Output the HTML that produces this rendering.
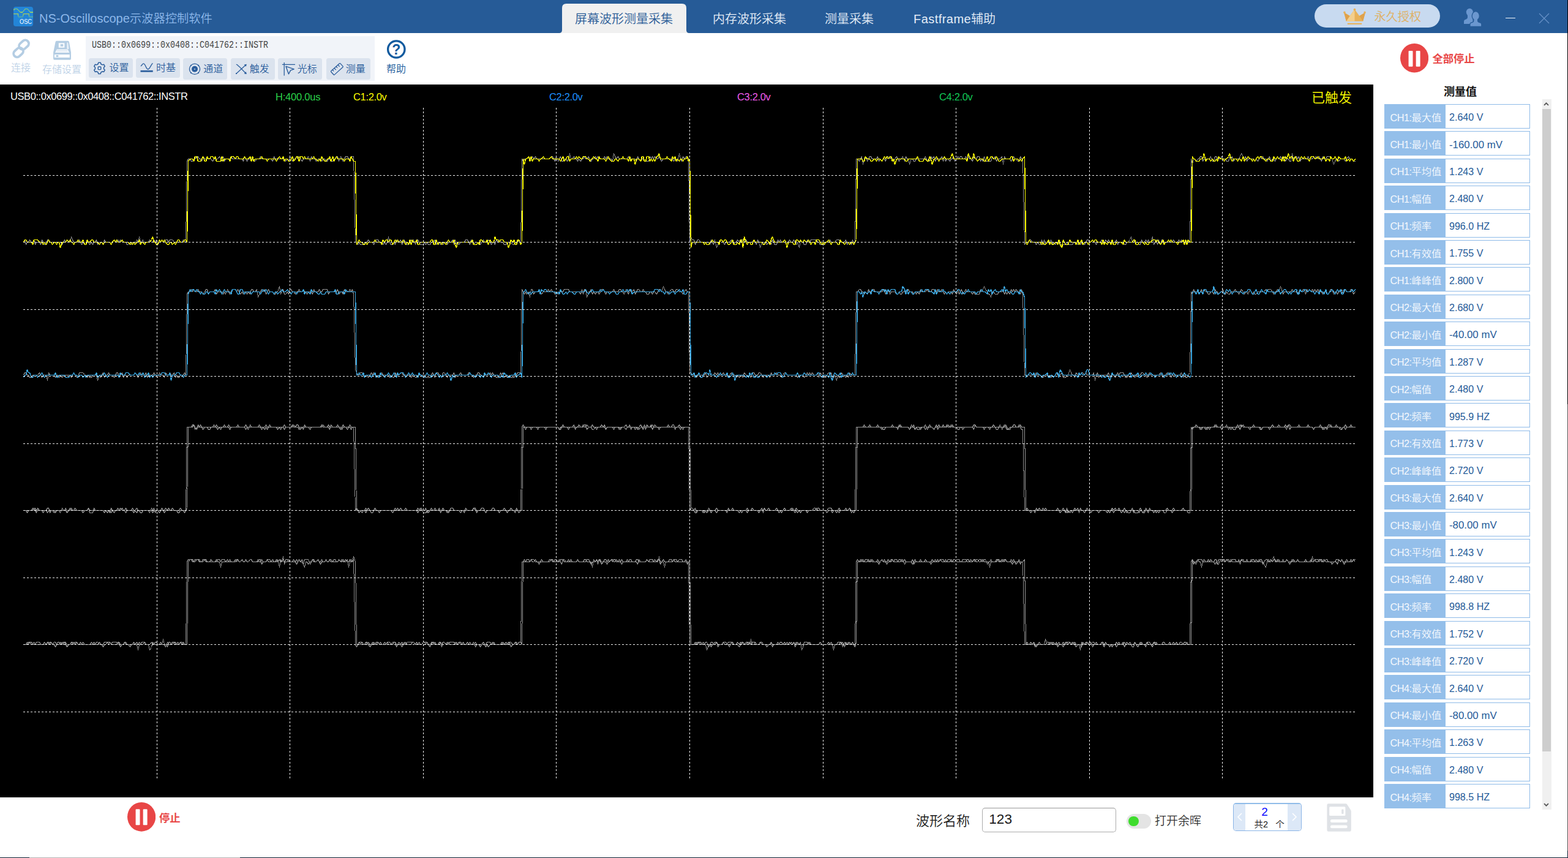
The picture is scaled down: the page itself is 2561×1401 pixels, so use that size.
<!DOCTYPE html><html lang="zh-CN"><head><meta charset="utf-8"><title>NS-Oscilloscope示波器控制软件</title><style>
*{box-sizing:border-box;margin:0;padding:0}
html,body{width:2561px;height:1401px;overflow:hidden;background:#fff}
body{position:relative;font-family:"Liberation Sans","Noto Sans CJK SC",sans-serif;font-weight:350;color:#222;-webkit-font-smoothing:antialiased}
.abs{position:absolute}
.t{position:absolute;white-space:nowrap;line-height:1}
#titlebar{left:0;top:0;width:2561px;height:54px;background:#265b97}
#toolbar{left:0;top:54px;width:2561px;height:84px;background:#fff}
#scope{left:0;top:138px;width:2243px;height:1164px;background:#000}
#panel{left:140px;top:59px;width:472px;height:73px;background:#f1f4f9}
.btn{position:absolute;width:71.6px;height:32px;background:#dbe3ee;border-radius:3.5px}
.btn .t{color:#2a5d9c;font-size:16px}
.row{position:absolute;left:2261px;width:238px;height:40px;border:1px solid #8fbbe8;background:#fff}
.row .lab{position:absolute;left:-1px;top:-1px;width:100px;height:40px;background:#94bfea}
.row .lt{position:absolute;left:8.6px;top:10.7px;font-size:16.3px;line-height:20px;color:#f4f8fd;white-space:nowrap}
.row .lt i{font-style:normal;letter-spacing:-0.55px}
.row .vt{position:absolute;left:105.3px;top:11.2px;font-size:17px;line-height:20px;color:#1f5a98;white-space:nowrap;transform:scaleX(.945);transform-origin:0 0}
.row .vt.mv{transform:scaleX(.99)}
</style></head><body>
<div id="titlebar" class="abs">
<svg class="abs" style="left:22px;top:11px" width="32" height="32" viewBox="0 0 32 32">
<rect x="0" y="0" width="32" height="32" rx="4" fill="#2385d8"/>
<path d="M0 5 L2.4 3.5 L6 3.5 L11 8.8 L15 8.8 L19.2 3.5 L22.8 3.5 L27.3 8.8 L32 8.8" fill="none" stroke="#93cb70" stroke-width="1.1"/>
<path d="M27.3 9.2 L32 9.2 M11.2 9.2 L15 9.2 M0.3 5 L1.6 5" fill="none" stroke="#93cb70" stroke-width="1.4"/>
<path d="M7.6 16.5 L15.6 16.5 M25.3 16.5 L32 16.5" fill="none" stroke="#4fa6ab" stroke-width="2"/>
<path d="M0 11.6 L7.6 11.6 L7.6 15.6 M15.6 15.6 L16.2 11.6 L25.3 11.6 L25.3 15.8" fill="none" stroke="#a9cc58" stroke-width="1.1"/>
<text x="10" y="28" font-family="Liberation Sans,sans-serif" font-size="10.2" fill="#fff" textLength="20" lengthAdjust="spacingAndGlyphs">OSC</text>
</svg>
<div class="t" id="apptitle" style="left:64px;top:18px;font-size:20px;line-height:24px;color:#8db8ea">NS-Oscilloscope<span style="font-size:19.3px">示波器控制软件</span></div>
<svg class="abs" style="left:914px;top:5px" width="211" height="49" viewBox="0 0 211 49">
<path d="M0 49 Q4 48.5 4 44 L4 8 Q4 1 11 1 L200 1 Q207 1 207 8 L207 44 Q207 48.5 211 49 Z" fill="#f0f0f0"/></svg>
<div class="t" style="left:939px;top:18px;font-size:20px;line-height:26px;color:#2a5c97">屏幕波形测量采集</div>
<div class="t" style="left:1164px;top:18px;font-size:20px;line-height:26px;color:#e4edf7">内存波形采集</div>
<div class="t" style="left:1347px;top:18px;font-size:20px;line-height:26px;color:#e4edf7">测量采集</div>
<div class="t" id="ff" style="left:1492px;top:18px;font-size:20px;line-height:26px;color:#e4edf7"><span style="letter-spacing:0.45px">Fastframe</span>辅助</div>
<div class="abs" style="left:2147px;top:7px;width:205px;height:38px;border-radius:19px;background:#c8daf0"></div>
<svg class="abs" style="left:2193.5px;top:13px" width="37" height="29" viewBox="0 0 38 29">
<path d="M5 22 L1 7 L11 13 L19 2 L27 13 L37 7 L33 22 Z" fill="#e8b25a"/>
<path d="M5 22 L1 7 L11 13 L19 2 L19 22 Z" fill="#f3cf8d"/>
<path d="M5 22 L1 7 L11 13 Z" fill="#dfa24c"/><path d="M33 22 L37 7 L27 13 Z" fill="#dfa24c"/>
<circle cx="19" cy="2.5" r="2" fill="#e8b25a"/><circle cx="2" cy="7" r="1.8" fill="#e8b25a"/><circle cx="36" cy="7" r="1.8" fill="#e8b25a"/>
<rect x="7" y="25" width="24" height="2.2" fill="#e8b25a"/></svg>
<div class="t" style="left:2244.5px;top:15px;font-size:19.2px;line-height:26px;letter-spacing:0px;color:#dfb062">永久授权</div>
<svg class="abs" style="left:2388px;top:11px" width="36" height="36" viewBox="2388 11 36 36">
<g fill="#6b97cf">
<ellipse cx="2400.3" cy="19.9" rx="5.5" ry="6.2"/>
<path d="M2397 24 L2397 28.5 Q2397 30.4 2395 31.2 L2392.6 32.2 Q2391 32.9 2391 34.8 L2391 38.9 L2405.5 38.9 L2405.5 24 Z"/>
</g>
<g fill="#6b97cf" stroke="#265b97" stroke-width="1.3">
<path d="M2407 30 L2407 34 Q2407 35.6 2405 36.3 L2402.5 37.2 Q2400.9 37.9 2400.9 39.8 L2400.9 43.3 L2419.8 43.3 L2419.8 39.8 Q2419.8 37.9 2418.2 37.2 L2415.6 36.3 Q2413.6 35.6 2413.6 34 L2413.6 30 Z"/>
<ellipse cx="2410.3" cy="25.9" rx="6.1" ry="7.2"/>
</g>
<rect x="2407.6" y="30" width="5.4" height="5" fill="#6b97cf"/>
</svg>
<div class="abs" style="left:2458.8px;top:28.6px;width:16.4px;height:1.6px;background:#f4f8fc"></div>
<svg class="abs" style="left:2513px;top:21px" width="18" height="18" viewBox="0 0 18 18"><path d="M1 1 L17 17 M17 1 L1 17" stroke="#6893c8" stroke-width="1.15" fill="none"/></svg>
</div>
<div id="toolbar" class="abs"></div>
<svg class="abs" style="left:17px;top:61px" width="36" height="36" viewBox="17 61 36 36">
<g fill="none" stroke="#b4cde3" stroke-width="3.9">
<rect x="30.4" y="67.45" width="17.3" height="11.5" rx="5.75" transform="rotate(-42 39.05 73.2)"/>
<rect x="21.4" y="79.8" width="17.3" height="11.5" rx="5.75" transform="rotate(-42 30.05 85.55)"/>
</g>
</svg>
<div class="t" style="left:18px;top:100px;font-size:16px;line-height:22px;color:#bed2e7">连接</div>
<svg class="abs" style="left:85px;top:65px" width="33" height="34" viewBox="85 65 33 34">
<path d="M92.5 66.8 L111 66.8 Q112.6 66.8 112.9 68.4 L116 85.5 L116 96 Q116 97.7 114.3 97.7 L88.8 97.7 Q87.1 97.7 87.1 96 L87.1 85.5 L90.6 68.4 Q90.9 66.8 92.5 66.8 Z" fill="#b4cde3"/>
<path d="M92.8 80.6 L110.6 80.6 L113.3 86 L89.9 86 Z" fill="#f3f7fb"/>
<path d="M109.3 69.5 L111.2 69.5 L112.6 80 L109.3 80 Z" fill="#eaf1f8"/>
<rect x="95.8" y="70.3" width="9.6" height="7.4" fill="#fbfdfe"/>
<rect x="98.8" y="72.1" width="4.4" height="3.7" fill="#b4cde3"/>
<rect x="93" y="82.4" width="17" height="1" fill="#d5e2ef"/>
<rect x="88.9" y="89" width="24.9" height="5" fill="#fbfdfe"/>
<rect x="91.6" y="90" width="3.7" height="3" fill="#b4cde3"/>
</svg>
<div class="t" style="left:69px;top:103px;font-size:16px;line-height:22px;color:#bed2e7">存储设置</div>
<div id="panel" class="abs"></div>
<div class="t" id="addr" style="left:150px;top:63.8px;font-family:'Liberation Mono','Noto Sans CJK SC',monospace;font-size:16px;line-height:20px;color:#444;transform:scaleX(.8333);transform-origin:0 0">USB0::0x0699::0x0408::C041762::INSTR</div>
<div class="btn" style="left:145.2px;top:95px;height:32px"></div>
<div class="t" style="left:178.6px;top:99.6px;font-size:16px;line-height:22px;color:#2a5d9c">设置</div>
<div class="btn" style="left:222.2px;top:95px;height:32px"></div>
<div class="t" style="left:254.9px;top:99.6px;font-size:16px;line-height:22px;color:#2a5d9c">时基</div>
<div class="btn" style="left:299.2px;top:95px;height:35px"></div>
<div class="t" style="left:332.2px;top:102.4px;font-size:16px;line-height:22px;color:#2a5d9c">通道</div>
<div class="btn" style="left:377.3px;top:95px;height:35px"></div>
<div class="t" style="left:407.8px;top:102.4px;font-size:16px;line-height:22px;color:#2a5d9c">触发</div>
<div class="btn" style="left:454.2px;top:95px;height:35px"></div>
<div class="t" style="left:485.8px;top:102.4px;font-size:16px;line-height:22px;color:#2a5d9c">光标</div>
<div class="btn" style="left:533.3px;top:95px;height:35px"></div>
<div class="t" style="left:564.8px;top:102.4px;font-size:16px;line-height:22px;color:#2a5d9c">测量</div>
<svg class="abs" style="left:140px;top:59px" width="472" height="73" viewBox="140 59 472 73">
<polygon points="164.84,104.49 164.27,102.17 160.73,102.17 160.16,104.49 157.78,105.87 155.48,105.20 153.71,108.27 155.43,109.93 155.43,112.67 153.71,114.33 155.48,117.40 157.78,116.73 160.16,118.11 160.73,120.43 164.27,120.43 164.84,118.11 167.22,116.73 169.52,117.40 171.29,114.33 169.57,112.67 169.57,109.93 171.29,108.27 169.52,105.20 167.22,105.87" fill="none" stroke="#2a5d9c" stroke-width="1.5" stroke-linejoin="round"/>
<rect x="160.2" y="109" width="4.6" height="4.6" rx="1" fill="none" stroke="#2a5d9c" stroke-width="1.4"/>
<path d="M229.8 107.9 C231.6 107.9 232 103.9 234.3 103.9 C237.6 103.9 238.4 113 241.7 113 C244.6 113 246.2 106 249.4 103.3" fill="none" stroke="#2a5d9c" stroke-width="1.4"/>
<rect x="229.5" y="114.9" width="20.2" height="2.7" fill="#2a5d9c"/>
<circle cx="318" cy="112.8" r="8.6" fill="none" stroke="#2a5d9c" stroke-width="1.3"/>
<circle cx="318" cy="112.8" r="5" fill="#2a5d9c"/>
<rect x="317.2" y="112" width="1.6" height="1.6" fill="#dbe3ee"/>
<circle cx="311.92" cy="106.72" r="1.05" fill="#2a5d9c"/>
<circle cx="324.08" cy="106.72" r="1.05" fill="#2a5d9c"/>
<circle cx="311.92" cy="118.88" r="1.05" fill="#2a5d9c"/>
<circle cx="324.08" cy="118.88" r="1.05" fill="#2a5d9c"/>
<path d="M385.6 120.4 L402 105.6 M385.8 105.4 Q387.6 105.2 388.4 106.6 Q389.2 108 390.6 108.6 L402 120.2" fill="none" stroke="#2a5d9c" stroke-width="1.3"/>
<path d="M402.8 104.8 L398.6 105.6 L401.8 108.8 Z M402.8 121 L398.6 120.2 L401.8 117 Z" fill="#2a5d9c"/>
<rect x="385" y="119.2" width="1.8" height="1.8" fill="#2a5d9c"/>
<path d="M464.2 102 V123.6 M460.9 105.3 H482" fill="none" stroke="#2a5d9c" stroke-width="1.3"/>
<path d="M467 108.4 L480.2 112.8 L474.6 114.8 L471.4 120.8 Z" fill="none" stroke="#2a5d9c" stroke-width="1.4" stroke-linejoin="round"/>
<g transform="rotate(-42 550.4 112.8)" fill="none" stroke="#2a5d9c" stroke-width="1.3"><rect x="540.2" y="108.7" width="20.4" height="8.2" rx="1.2"/><path d="M544.2 108.7 V111.8 M548.2 108.7 V112.6 M552.2 108.7 V111.8 M556.2 108.7 V112.6"/></g>
</svg>
<svg class="abs" style="left:630px;top:63px" width="36" height="36" viewBox="630 63 36 36">
<circle cx="647.3" cy="80.5" r="13.7" fill="none" stroke="#105a9e" stroke-width="3.3"/>
<text x="647.3" y="89.2" text-anchor="middle" font-family="Liberation Sans,sans-serif" font-weight="bold" font-size="23" fill="#105a9e">?</text></svg>
<div class="t" style="left:631px;top:102.3px;font-size:16px;line-height:22px;color:#1a5b9b">帮助</div>
<svg class="abs" style="left:2286.50px;top:71.20px" width="46.20" height="47.60" viewBox="0 0 50 50" preserveAspectRatio="none"><circle cx="25" cy="25" r="25" fill="#e84646"/><rect x="14.7" y="12.50" width="7.5" height="27.2" rx="1.2" fill="#fff"/><rect x="27.8" y="12.50" width="7.5" height="27.2" rx="1.2" fill="#fff"/></svg>
<div class="t" style="left:2339.4px;top:84.2px;font-size:17.3px;line-height:24px;font-weight:bold;color:#e84646">全部停止</div>
<div id="scope" class="abs"></div>
<svg class="abs" style="left:0;top:138px" width="2243" height="1164" viewBox="0 138 2243 1164">
<polyline points="38.5,395.5 40.5,391.5 42.5,399.5 44.5,395.5 46.5,395.5 48.5,391.5 51.5,395.5 53.5,395.5 55.5,391.5 57.5,399.5 59.5,395.5 61.5,395.5 64.5,395.5 66.5,399.5 68.5,391.5 70.5,395.5 72.5,399.5 75.5,399.5 77.5,391.5 79.5,391.5 81.5,395.5 83.5,395.5 85.5,395.5 88.5,395.5 90.5,395.5 92.5,395.5 94.5,395.5 96.5,395.5 98.5,395.5 101.5,399.5 103.5,395.5 105.5,391.5 107.5,395.5 109.5,391.5 112.5,395.5 114.5,395.5 116.5,386.5 118.5,391.5 120.5,395.5 122.5,395.5 125.5,395.5 127.5,395.5 129.5,391.5 131.5,395.5 133.5,399.5 135.5,395.5 138.5,399.5 140.5,399.5 142.5,395.5 144.5,395.5 146.5,399.5 149.5,395.5 151.5,399.5 153.5,395.5 155.5,395.5 157.5,391.5 159.5,399.5 162.5,395.5 164.5,395.5 166.5,395.5 168.5,399.5 170.5,391.5 172.5,395.5 175.5,395.5 177.5,395.5 179.5,395.5 181.5,399.5 183.5,395.5 186.5,391.5 188.5,395.5 190.5,395.5 192.5,391.5 194.5,395.5 196.5,391.5 199.5,395.5 201.5,395.5 203.5,395.5 205.5,395.5 207.5,399.5 209.5,399.5 212.5,395.5 214.5,399.5 216.5,395.5 218.5,395.5 220.5,399.5 223.5,391.5 225.5,395.5 227.5,386.5 229.5,395.5 231.5,395.5 233.5,391.5 236.5,399.5 238.5,395.5 240.5,395.5 242.5,395.5 244.5,391.5 247.5,395.5 249.5,395.5 251.5,391.5 253.5,395.5 255.5,391.5 257.5,399.5 260.5,395.5 262.5,395.5 264.5,391.5 266.5,395.5 268.5,395.5 270.5,391.5 273.5,391.5 275.5,395.5 277.5,391.5 279.5,391.5 281.5,391.5 284.5,395.5 286.5,395.5 288.5,395.5 290.5,395.5 292.5,395.5 294.5,395.5 297.5,395.5 299.5,391.5 301.5,395.5 303.5,395.5 305.5,263.5 307.5,259.5 310.5,259.5 312.5,263.5 314.5,263.5 316.5,259.5 318.5,259.5 321.5,255.5 323.5,255.5 325.5,259.5 327.5,259.5 329.5,263.5 331.5,255.5 334.5,259.5 336.5,259.5 338.5,259.5 340.5,259.5 342.5,259.5 344.5,259.5 347.5,263.5 349.5,259.5 351.5,259.5 353.5,259.5 355.5,259.5 358.5,255.5 360.5,259.5 362.5,263.5 364.5,255.5 366.5,263.5 368.5,259.5 371.5,259.5 373.5,259.5 375.5,259.5 377.5,255.5 379.5,259.5 381.5,259.5 384.5,259.5 386.5,259.5 388.5,259.5 390.5,259.5 392.5,259.5 395.5,259.5 397.5,263.5 399.5,255.5 401.5,259.5 403.5,263.5 405.5,259.5 408.5,259.5 410.5,259.5 412.5,259.5 414.5,263.5 416.5,263.5 419.5,259.5 421.5,259.5 423.5,259.5 425.5,255.5 427.5,259.5 429.5,259.5 432.5,259.5 434.5,259.5 436.5,259.5 438.5,259.5 440.5,259.5 442.5,259.5 445.5,263.5 447.5,255.5 449.5,259.5 451.5,259.5 453.5,259.5 456.5,259.5 458.5,259.5 460.5,259.5 462.5,259.5 464.5,259.5 466.5,263.5 469.5,259.5 471.5,263.5 473.5,255.5 475.5,259.5 477.5,263.5 479.5,259.5 482.5,259.5 484.5,255.5 486.5,259.5 488.5,255.5 490.5,259.5 493.5,263.5 495.5,259.5 497.5,259.5 499.5,259.5 501.5,259.5 503.5,255.5 506.5,263.5 508.5,255.5 510.5,259.5 512.5,259.5 514.5,259.5 516.5,263.5 519.5,259.5 521.5,259.5 523.5,259.5 525.5,263.5 527.5,259.5 530.5,259.5 532.5,263.5 534.5,263.5 536.5,259.5 538.5,259.5 540.5,263.5 543.5,263.5 545.5,259.5 547.5,259.5 549.5,255.5 551.5,255.5 553.5,263.5 556.5,255.5 558.5,259.5 560.5,263.5 562.5,259.5 564.5,255.5 567.5,255.5 569.5,259.5 571.5,259.5 573.5,255.5 575.5,255.5 577.5,255.5 580.5,395.5 582.5,395.5 584.5,399.5 586.5,395.5 588.5,399.5 591.5,399.5 593.5,399.5 595.5,395.5 597.5,395.5 599.5,395.5 601.5,391.5 604.5,395.5 606.5,395.5 608.5,395.5 610.5,399.5 612.5,395.5 614.5,391.5 617.5,391.5 619.5,395.5 621.5,395.5 623.5,395.5 625.5,399.5 628.5,395.5 630.5,399.5 632.5,395.5 634.5,386.5 636.5,395.5 638.5,399.5 641.5,399.5 643.5,395.5 645.5,399.5 647.5,391.5 649.5,395.5 651.5,395.5 654.5,391.5 656.5,399.5 658.5,395.5 660.5,391.5 662.5,399.5 665.5,399.5 667.5,399.5 669.5,395.5 671.5,391.5 673.5,395.5 675.5,391.5 678.5,399.5 680.5,391.5 682.5,391.5 684.5,395.5 686.5,399.5 688.5,399.5 691.5,399.5 693.5,395.5 695.5,399.5 697.5,395.5 699.5,399.5 702.5,399.5 704.5,395.5 706.5,395.5 708.5,395.5 710.5,391.5 712.5,399.5 715.5,395.5 717.5,395.5 719.5,399.5 721.5,395.5 723.5,399.5 725.5,395.5 728.5,395.5 730.5,399.5 732.5,395.5 734.5,395.5 736.5,395.5 739.5,391.5 741.5,399.5 743.5,391.5 745.5,399.5 747.5,395.5 749.5,399.5 752.5,395.5 754.5,395.5 756.5,395.5 758.5,395.5 760.5,391.5 763.5,391.5 765.5,395.5 767.5,399.5 769.5,391.5 771.5,395.5 773.5,395.5 776.5,399.5 778.5,399.5 780.5,395.5 782.5,399.5 784.5,399.5 786.5,395.5 789.5,391.5 791.5,395.5 793.5,395.5 795.5,395.5 797.5,391.5 800.5,395.5 802.5,399.5 804.5,395.5 806.5,395.5 808.5,399.5 810.5,391.5 813.5,395.5 815.5,391.5 817.5,395.5 819.5,395.5 821.5,395.5 823.5,399.5 826.5,399.5 828.5,395.5 830.5,395.5 832.5,395.5 834.5,395.5 837.5,399.5 839.5,399.5 841.5,395.5 843.5,395.5 845.5,395.5 847.5,391.5 850.5,399.5 852.5,259.5 854.5,263.5 856.5,259.5 858.5,259.5 860.5,259.5 863.5,255.5 865.5,259.5 867.5,259.5 869.5,255.5 871.5,259.5 874.5,255.5 876.5,259.5 878.5,259.5 880.5,259.5 882.5,259.5 884.5,259.5 887.5,259.5 889.5,259.5 891.5,259.5 893.5,259.5 895.5,259.5 897.5,259.5 900.5,255.5 902.5,255.5 904.5,259.5 906.5,263.5 908.5,255.5 911.5,263.5 913.5,259.5 915.5,255.5 917.5,263.5 919.5,263.5 921.5,259.5 924.5,259.5 926.5,263.5 928.5,259.5 930.5,250.5 932.5,259.5 934.5,259.5 937.5,255.5 939.5,259.5 941.5,259.5 943.5,263.5 945.5,259.5 948.5,263.5 950.5,259.5 952.5,259.5 954.5,255.5 956.5,259.5 958.5,259.5 961.5,255.5 963.5,263.5 965.5,263.5 967.5,259.5 969.5,259.5 972.5,255.5 974.5,259.5 976.5,255.5 978.5,259.5 980.5,259.5 982.5,259.5 985.5,259.5 987.5,255.5 989.5,259.5 991.5,255.5 993.5,259.5 995.5,259.5 998.5,259.5 1000.5,263.5 1002.5,250.5 1004.5,255.5 1006.5,259.5 1009.5,255.5 1011.5,259.5 1013.5,259.5 1015.5,259.5 1017.5,259.5 1019.5,259.5 1022.5,259.5 1024.5,259.5 1026.5,255.5 1028.5,259.5 1030.5,259.5 1032.5,259.5 1035.5,259.5 1037.5,259.5 1039.5,263.5 1041.5,255.5 1043.5,259.5 1046.5,263.5 1048.5,259.5 1050.5,259.5 1052.5,263.5 1054.5,263.5 1056.5,263.5 1059.5,263.5 1061.5,255.5 1063.5,259.5 1065.5,255.5 1067.5,259.5 1069.5,255.5 1072.5,259.5 1074.5,259.5 1076.5,255.5 1078.5,259.5 1080.5,263.5 1083.5,259.5 1085.5,259.5 1087.5,259.5 1089.5,259.5 1091.5,259.5 1093.5,259.5 1096.5,259.5 1098.5,259.5 1100.5,263.5 1102.5,259.5 1104.5,259.5 1106.5,263.5 1109.5,250.5 1111.5,259.5 1113.5,263.5 1115.5,255.5 1117.5,259.5 1120.5,255.5 1122.5,255.5 1124.5,259.5 1126.5,395.5 1128.5,386.5 1130.5,391.5 1133.5,391.5 1135.5,399.5 1137.5,395.5 1139.5,391.5 1141.5,391.5 1144.5,395.5 1146.5,395.5 1148.5,395.5 1150.5,395.5 1152.5,395.5 1154.5,395.5 1157.5,395.5 1159.5,399.5 1161.5,391.5 1163.5,395.5 1165.5,399.5 1167.5,391.5 1170.5,404.5 1172.5,399.5 1174.5,395.5 1176.5,391.5 1178.5,391.5 1181.5,395.5 1183.5,399.5 1185.5,395.5 1187.5,395.5 1189.5,395.5 1191.5,395.5 1194.5,391.5 1196.5,395.5 1198.5,399.5 1200.5,395.5 1202.5,395.5 1204.5,391.5 1207.5,395.5 1209.5,395.5 1211.5,391.5 1213.5,391.5 1215.5,395.5 1218.5,391.5 1220.5,395.5 1222.5,395.5 1224.5,395.5 1226.5,395.5 1228.5,395.5 1231.5,391.5 1233.5,395.5 1235.5,399.5 1237.5,391.5 1239.5,395.5 1241.5,404.5 1244.5,395.5 1246.5,399.5 1248.5,395.5 1250.5,395.5 1252.5,399.5 1255.5,395.5 1257.5,395.5 1259.5,399.5 1261.5,391.5 1263.5,395.5 1265.5,399.5 1268.5,399.5 1270.5,391.5 1272.5,395.5 1274.5,391.5 1276.5,395.5 1278.5,395.5 1281.5,395.5 1283.5,395.5 1285.5,395.5 1287.5,395.5 1289.5,391.5 1292.5,395.5 1294.5,395.5 1296.5,391.5 1298.5,395.5 1300.5,399.5 1302.5,395.5 1305.5,404.5 1307.5,391.5 1309.5,395.5 1311.5,395.5 1313.5,399.5 1316.5,399.5 1318.5,391.5 1320.5,395.5 1322.5,395.5 1324.5,391.5 1326.5,391.5 1329.5,391.5 1331.5,391.5 1333.5,391.5 1335.5,395.5 1337.5,395.5 1339.5,399.5 1342.5,399.5 1344.5,399.5 1346.5,395.5 1348.5,395.5 1350.5,395.5 1353.5,395.5 1355.5,391.5 1357.5,395.5 1359.5,395.5 1361.5,395.5 1363.5,395.5 1366.5,391.5 1368.5,391.5 1370.5,391.5 1372.5,395.5 1374.5,395.5 1376.5,395.5 1379.5,395.5 1381.5,391.5 1383.5,399.5 1385.5,395.5 1387.5,395.5 1390.5,399.5 1392.5,391.5 1394.5,399.5 1396.5,395.5 1398.5,259.5 1400.5,259.5 1403.5,263.5 1405.5,259.5 1407.5,255.5 1409.5,268.5 1411.5,259.5 1413.5,255.5 1416.5,263.5 1418.5,259.5 1420.5,255.5 1422.5,255.5 1424.5,259.5 1427.5,259.5 1429.5,259.5 1431.5,259.5 1433.5,255.5 1435.5,263.5 1437.5,259.5 1440.5,263.5 1442.5,259.5 1444.5,259.5 1446.5,263.5 1448.5,255.5 1450.5,255.5 1453.5,259.5 1455.5,255.5 1457.5,259.5 1459.5,263.5 1461.5,259.5 1464.5,255.5 1466.5,259.5 1468.5,263.5 1470.5,259.5 1472.5,259.5 1474.5,255.5 1477.5,263.5 1479.5,255.5 1481.5,259.5 1483.5,259.5 1485.5,268.5 1488.5,259.5 1490.5,259.5 1492.5,263.5 1494.5,263.5 1496.5,259.5 1498.5,259.5 1501.5,259.5 1503.5,259.5 1505.5,259.5 1507.5,259.5 1509.5,259.5 1511.5,255.5 1514.5,263.5 1516.5,259.5 1518.5,263.5 1520.5,255.5 1522.5,259.5 1525.5,255.5 1527.5,263.5 1529.5,259.5 1531.5,259.5 1533.5,259.5 1535.5,259.5 1538.5,255.5 1540.5,263.5 1542.5,255.5 1544.5,263.5 1546.5,259.5 1548.5,259.5 1551.5,263.5 1553.5,259.5 1555.5,259.5 1557.5,255.5 1559.5,263.5 1562.5,259.5 1564.5,255.5 1566.5,259.5 1568.5,255.5 1570.5,255.5 1572.5,259.5 1575.5,259.5 1577.5,255.5 1579.5,259.5 1581.5,255.5 1583.5,259.5 1585.5,259.5 1588.5,263.5 1590.5,255.5 1592.5,259.5 1594.5,259.5 1596.5,255.5 1599.5,255.5 1601.5,263.5 1603.5,259.5 1605.5,263.5 1607.5,255.5 1609.5,263.5 1612.5,263.5 1614.5,263.5 1616.5,263.5 1618.5,263.5 1620.5,255.5 1622.5,259.5 1625.5,255.5 1627.5,263.5 1629.5,259.5 1631.5,259.5 1633.5,259.5 1636.5,255.5 1638.5,268.5 1640.5,255.5 1642.5,259.5 1644.5,259.5 1646.5,259.5 1649.5,259.5 1651.5,263.5 1653.5,259.5 1655.5,255.5 1657.5,259.5 1659.5,259.5 1662.5,263.5 1664.5,263.5 1666.5,255.5 1668.5,259.5 1670.5,259.5 1673.5,399.5 1675.5,395.5 1677.5,395.5 1679.5,395.5 1681.5,391.5 1683.5,391.5 1686.5,395.5 1688.5,395.5 1690.5,395.5 1692.5,399.5 1694.5,395.5 1697.5,399.5 1699.5,399.5 1701.5,391.5 1703.5,399.5 1705.5,391.5 1707.5,399.5 1710.5,395.5 1712.5,395.5 1714.5,399.5 1716.5,391.5 1718.5,399.5 1720.5,395.5 1723.5,399.5 1725.5,395.5 1727.5,395.5 1729.5,395.5 1731.5,399.5 1734.5,399.5 1736.5,399.5 1738.5,399.5 1740.5,399.5 1742.5,395.5 1744.5,399.5 1747.5,399.5 1749.5,399.5 1751.5,399.5 1753.5,395.5 1755.5,395.5 1757.5,395.5 1760.5,399.5 1762.5,395.5 1764.5,399.5 1766.5,395.5 1768.5,399.5 1771.5,399.5 1773.5,395.5 1775.5,391.5 1777.5,391.5 1779.5,395.5 1781.5,395.5 1784.5,391.5 1786.5,395.5 1788.5,395.5 1790.5,399.5 1792.5,395.5 1794.5,395.5 1797.5,395.5 1799.5,391.5 1801.5,395.5 1803.5,399.5 1805.5,391.5 1808.5,395.5 1810.5,391.5 1812.5,395.5 1814.5,395.5 1816.5,395.5 1818.5,395.5 1821.5,395.5 1823.5,391.5 1825.5,399.5 1827.5,395.5 1829.5,395.5 1831.5,395.5 1834.5,395.5 1836.5,399.5 1838.5,399.5 1840.5,395.5 1842.5,395.5 1845.5,391.5 1847.5,386.5 1849.5,395.5 1851.5,391.5 1853.5,395.5 1855.5,395.5 1858.5,395.5 1860.5,399.5 1862.5,399.5 1864.5,391.5 1866.5,395.5 1869.5,395.5 1871.5,391.5 1873.5,395.5 1875.5,391.5 1877.5,395.5 1879.5,395.5 1882.5,386.5 1884.5,399.5 1886.5,395.5 1888.5,391.5 1890.5,399.5 1892.5,391.5 1895.5,399.5 1897.5,391.5 1899.5,391.5 1901.5,395.5 1903.5,395.5 1906.5,395.5 1908.5,395.5 1910.5,395.5 1912.5,395.5 1914.5,395.5 1916.5,391.5 1919.5,395.5 1921.5,395.5 1923.5,395.5 1925.5,391.5 1927.5,395.5 1929.5,391.5 1932.5,395.5 1934.5,395.5 1936.5,395.5 1938.5,395.5 1940.5,391.5 1943.5,395.5 1945.5,259.5 1947.5,268.5 1949.5,259.5 1951.5,259.5 1953.5,263.5 1956.5,259.5 1958.5,259.5 1960.5,255.5 1962.5,255.5 1964.5,263.5 1966.5,259.5 1969.5,259.5 1971.5,259.5 1973.5,259.5 1975.5,259.5 1977.5,255.5 1980.5,263.5 1982.5,263.5 1984.5,255.5 1986.5,255.5 1988.5,259.5 1990.5,259.5 1993.5,259.5 1995.5,255.5 1997.5,259.5 1999.5,259.5 2001.5,259.5 2003.5,263.5 2006.5,263.5 2008.5,255.5 2010.5,259.5 2012.5,255.5 2014.5,263.5 2017.5,259.5 2019.5,259.5 2021.5,259.5 2023.5,259.5 2025.5,255.5 2027.5,250.5 2030.5,255.5 2032.5,259.5 2034.5,255.5 2036.5,263.5 2038.5,259.5 2041.5,259.5 2043.5,259.5 2045.5,259.5 2047.5,259.5 2049.5,263.5 2051.5,259.5 2054.5,263.5 2056.5,259.5 2058.5,255.5 2060.5,259.5 2062.5,255.5 2064.5,259.5 2067.5,259.5 2069.5,263.5 2071.5,259.5 2073.5,255.5 2075.5,263.5 2078.5,259.5 2080.5,259.5 2082.5,263.5 2084.5,259.5 2086.5,255.5 2088.5,259.5 2091.5,255.5 2093.5,259.5 2095.5,259.5 2097.5,255.5 2099.5,263.5 2101.5,259.5 2104.5,259.5 2106.5,263.5 2108.5,263.5 2110.5,250.5 2112.5,259.5 2115.5,255.5 2117.5,255.5 2119.5,259.5 2121.5,255.5 2123.5,263.5 2125.5,259.5 2128.5,259.5 2130.5,259.5 2132.5,259.5 2134.5,259.5 2136.5,255.5 2138.5,259.5 2141.5,259.5 2143.5,259.5 2145.5,255.5 2147.5,259.5 2149.5,255.5 2152.5,259.5 2154.5,255.5 2156.5,259.5 2158.5,263.5 2160.5,255.5 2162.5,259.5 2165.5,259.5 2167.5,255.5 2169.5,255.5 2171.5,255.5 2173.5,255.5 2175.5,259.5 2178.5,268.5 2180.5,263.5 2182.5,259.5 2184.5,259.5 2186.5,263.5 2189.5,259.5 2191.5,259.5 2193.5,259.5 2195.5,259.5 2197.5,263.5 2199.5,259.5 2202.5,255.5 2204.5,259.5 2206.5,259.5 2208.5,259.5 2210.5,263.5 2213.5,263.5" fill="none" stroke="#8c8c8c" stroke-width="1" stroke-linejoin="bevel" shape-rendering="crispEdges"/>
<polyline points="38.5,395.5 40.5,391.5 42.5,391.5 44.5,395.5 46.5,395.5 48.5,395.5 51.5,395.5 53.5,399.5 55.5,391.5 57.5,391.5 59.5,391.5 61.5,391.5 64.5,395.5 66.5,395.5 68.5,395.5 70.5,399.5 72.5,395.5 75.5,399.5 77.5,395.5 79.5,391.5 81.5,395.5 83.5,395.5 85.5,399.5 88.5,395.5 90.5,395.5 92.5,399.5 94.5,395.5 96.5,395.5 98.5,404.5 101.5,395.5 103.5,395.5 105.5,395.5 107.5,395.5 109.5,391.5 112.5,395.5 114.5,391.5 116.5,395.5 118.5,395.5 120.5,399.5 122.5,395.5 125.5,395.5 127.5,391.5 129.5,395.5 131.5,395.5 133.5,395.5 135.5,391.5 138.5,399.5 140.5,399.5 142.5,391.5 144.5,395.5 146.5,395.5 149.5,391.5 151.5,391.5 153.5,395.5 155.5,395.5 157.5,395.5 159.5,395.5 162.5,399.5 164.5,395.5 166.5,395.5 168.5,399.5 170.5,395.5 172.5,395.5 175.5,395.5 177.5,395.5 179.5,395.5 181.5,399.5 183.5,395.5 186.5,391.5 188.5,395.5 190.5,391.5 192.5,395.5 194.5,395.5 196.5,395.5 199.5,391.5 201.5,395.5 203.5,395.5 205.5,395.5 207.5,395.5 209.5,395.5 212.5,399.5 214.5,395.5 216.5,399.5 218.5,395.5 220.5,399.5 223.5,395.5 225.5,395.5 227.5,391.5 229.5,399.5 231.5,395.5 233.5,395.5 236.5,399.5 238.5,395.5 240.5,395.5 242.5,395.5 244.5,395.5 247.5,391.5 249.5,386.5 251.5,395.5 253.5,395.5 255.5,399.5 257.5,399.5 260.5,391.5 262.5,395.5 264.5,391.5 266.5,395.5 268.5,391.5 270.5,395.5 273.5,399.5 275.5,399.5 277.5,395.5 279.5,395.5 281.5,399.5 284.5,395.5 286.5,399.5 288.5,395.5 290.5,391.5 292.5,391.5 294.5,395.5 297.5,395.5 299.5,395.5 301.5,391.5 303.5,391.5 305.5,395.5 307.5,263.5 310.5,259.5 312.5,259.5 314.5,259.5 316.5,263.5 318.5,255.5 321.5,255.5 323.5,263.5 325.5,263.5 327.5,263.5 329.5,259.5 331.5,255.5 334.5,263.5 336.5,263.5 338.5,255.5 340.5,259.5 342.5,259.5 344.5,255.5 347.5,255.5 349.5,259.5 351.5,255.5 353.5,263.5 355.5,263.5 358.5,263.5 360.5,263.5 362.5,255.5 364.5,263.5 366.5,259.5 368.5,259.5 371.5,259.5 373.5,259.5 375.5,263.5 377.5,255.5 379.5,255.5 381.5,255.5 384.5,259.5 386.5,255.5 388.5,255.5 390.5,259.5 392.5,259.5 395.5,259.5 397.5,259.5 399.5,255.5 401.5,259.5 403.5,259.5 405.5,259.5 408.5,255.5 410.5,263.5 412.5,255.5 414.5,263.5 416.5,259.5 419.5,259.5 421.5,259.5 423.5,259.5 425.5,259.5 427.5,255.5 429.5,259.5 432.5,259.5 434.5,259.5 436.5,263.5 438.5,259.5 440.5,259.5 442.5,259.5 445.5,259.5 447.5,259.5 449.5,259.5 451.5,263.5 453.5,259.5 456.5,255.5 458.5,259.5 460.5,259.5 462.5,255.5 464.5,263.5 466.5,259.5 469.5,259.5 471.5,263.5 473.5,263.5 475.5,259.5 477.5,255.5 479.5,263.5 482.5,259.5 484.5,255.5 486.5,255.5 488.5,263.5 490.5,255.5 493.5,255.5 495.5,259.5 497.5,255.5 499.5,259.5 501.5,259.5 503.5,259.5 506.5,259.5 508.5,259.5 510.5,259.5 512.5,255.5 514.5,259.5 516.5,259.5 519.5,263.5 521.5,259.5 523.5,263.5 525.5,255.5 527.5,259.5 530.5,263.5 532.5,263.5 534.5,259.5 536.5,259.5 538.5,255.5 540.5,263.5 543.5,255.5 545.5,263.5 547.5,259.5 549.5,255.5 551.5,259.5 553.5,259.5 556.5,259.5 558.5,259.5 560.5,259.5 562.5,263.5 564.5,259.5 567.5,259.5 569.5,259.5 571.5,263.5 573.5,255.5 575.5,259.5 577.5,263.5 580.5,263.5 582.5,399.5 584.5,395.5 586.5,391.5 588.5,395.5 591.5,395.5 593.5,399.5 595.5,399.5 597.5,395.5 599.5,399.5 601.5,395.5 604.5,395.5 606.5,395.5 608.5,395.5 610.5,395.5 612.5,391.5 614.5,395.5 617.5,395.5 619.5,395.5 621.5,395.5 623.5,399.5 625.5,391.5 628.5,395.5 630.5,391.5 632.5,391.5 634.5,395.5 636.5,391.5 638.5,391.5 641.5,399.5 643.5,395.5 645.5,391.5 647.5,395.5 649.5,391.5 651.5,395.5 654.5,395.5 656.5,395.5 658.5,391.5 660.5,395.5 662.5,399.5 665.5,395.5 667.5,399.5 669.5,391.5 671.5,399.5 673.5,391.5 675.5,395.5 678.5,395.5 680.5,391.5 682.5,399.5 684.5,399.5 686.5,395.5 688.5,395.5 691.5,395.5 693.5,395.5 695.5,395.5 697.5,395.5 699.5,395.5 702.5,395.5 704.5,391.5 706.5,391.5 708.5,399.5 710.5,399.5 712.5,391.5 715.5,399.5 717.5,395.5 719.5,395.5 721.5,399.5 723.5,395.5 725.5,395.5 728.5,399.5 730.5,395.5 732.5,391.5 734.5,395.5 736.5,395.5 739.5,395.5 741.5,391.5 743.5,399.5 745.5,404.5 747.5,395.5 749.5,395.5 752.5,395.5 754.5,395.5 756.5,395.5 758.5,395.5 760.5,395.5 763.5,395.5 765.5,395.5 767.5,395.5 769.5,395.5 771.5,391.5 773.5,399.5 776.5,399.5 778.5,399.5 780.5,395.5 782.5,399.5 784.5,391.5 786.5,391.5 789.5,395.5 791.5,395.5 793.5,395.5 795.5,391.5 797.5,399.5 800.5,391.5 802.5,395.5 804.5,395.5 806.5,395.5 808.5,386.5 810.5,391.5 813.5,391.5 815.5,395.5 817.5,391.5 819.5,391.5 821.5,391.5 823.5,395.5 826.5,395.5 828.5,395.5 830.5,404.5 832.5,399.5 834.5,391.5 837.5,395.5 839.5,391.5 841.5,399.5 843.5,399.5 845.5,391.5 847.5,391.5 850.5,399.5 852.5,395.5 854.5,259.5 856.5,268.5 858.5,259.5 860.5,259.5 863.5,255.5 865.5,263.5 867.5,255.5 869.5,263.5 871.5,259.5 874.5,259.5 876.5,259.5 878.5,259.5 880.5,263.5 882.5,259.5 884.5,259.5 887.5,255.5 889.5,259.5 891.5,259.5 893.5,259.5 895.5,259.5 897.5,259.5 900.5,255.5 902.5,259.5 904.5,259.5 906.5,259.5 908.5,259.5 911.5,259.5 913.5,259.5 915.5,263.5 917.5,259.5 919.5,255.5 921.5,263.5 924.5,259.5 926.5,255.5 928.5,255.5 930.5,263.5 932.5,259.5 934.5,259.5 937.5,259.5 939.5,259.5 941.5,255.5 943.5,259.5 945.5,255.5 948.5,259.5 950.5,259.5 952.5,255.5 954.5,255.5 956.5,255.5 958.5,259.5 961.5,259.5 963.5,263.5 965.5,259.5 967.5,259.5 969.5,255.5 972.5,259.5 974.5,259.5 976.5,263.5 978.5,255.5 980.5,259.5 982.5,259.5 985.5,259.5 987.5,259.5 989.5,263.5 991.5,259.5 993.5,255.5 995.5,259.5 998.5,263.5 1000.5,263.5 1002.5,263.5 1004.5,259.5 1006.5,259.5 1009.5,263.5 1011.5,259.5 1013.5,259.5 1015.5,259.5 1017.5,255.5 1019.5,259.5 1022.5,259.5 1024.5,259.5 1026.5,263.5 1028.5,255.5 1030.5,263.5 1032.5,259.5 1035.5,259.5 1037.5,268.5 1039.5,259.5 1041.5,259.5 1043.5,259.5 1046.5,263.5 1048.5,255.5 1050.5,255.5 1052.5,263.5 1054.5,263.5 1056.5,255.5 1059.5,255.5 1061.5,263.5 1063.5,259.5 1065.5,263.5 1067.5,259.5 1069.5,263.5 1072.5,255.5 1074.5,255.5 1076.5,250.5 1078.5,259.5 1080.5,259.5 1083.5,259.5 1085.5,259.5 1087.5,259.5 1089.5,255.5 1091.5,259.5 1093.5,259.5 1096.5,263.5 1098.5,255.5 1100.5,259.5 1102.5,255.5 1104.5,263.5 1106.5,259.5 1109.5,263.5 1111.5,259.5 1113.5,259.5 1115.5,263.5 1117.5,259.5 1120.5,259.5 1122.5,255.5 1124.5,263.5 1126.5,259.5 1128.5,404.5 1130.5,395.5 1133.5,395.5 1135.5,395.5 1137.5,395.5 1139.5,395.5 1141.5,395.5 1144.5,395.5 1146.5,395.5 1148.5,395.5 1150.5,399.5 1152.5,395.5 1154.5,399.5 1157.5,399.5 1159.5,395.5 1161.5,395.5 1163.5,391.5 1165.5,395.5 1167.5,395.5 1170.5,395.5 1172.5,395.5 1174.5,399.5 1176.5,391.5 1178.5,391.5 1181.5,395.5 1183.5,391.5 1185.5,391.5 1187.5,395.5 1189.5,399.5 1191.5,399.5 1194.5,395.5 1196.5,391.5 1198.5,399.5 1200.5,399.5 1202.5,399.5 1204.5,395.5 1207.5,399.5 1209.5,391.5 1211.5,391.5 1213.5,404.5 1215.5,386.5 1218.5,395.5 1220.5,399.5 1222.5,395.5 1224.5,395.5 1226.5,399.5 1228.5,399.5 1231.5,391.5 1233.5,395.5 1235.5,395.5 1237.5,395.5 1239.5,395.5 1241.5,395.5 1244.5,395.5 1246.5,399.5 1248.5,399.5 1250.5,395.5 1252.5,391.5 1255.5,395.5 1257.5,399.5 1259.5,391.5 1261.5,386.5 1263.5,391.5 1265.5,395.5 1268.5,395.5 1270.5,395.5 1272.5,395.5 1274.5,395.5 1276.5,395.5 1278.5,395.5 1281.5,391.5 1283.5,395.5 1285.5,404.5 1287.5,395.5 1289.5,395.5 1292.5,395.5 1294.5,395.5 1296.5,399.5 1298.5,399.5 1300.5,391.5 1302.5,391.5 1305.5,395.5 1307.5,391.5 1309.5,395.5 1311.5,395.5 1313.5,391.5 1316.5,395.5 1318.5,395.5 1320.5,391.5 1322.5,395.5 1324.5,399.5 1326.5,395.5 1329.5,395.5 1331.5,399.5 1333.5,391.5 1335.5,391.5 1337.5,391.5 1339.5,395.5 1342.5,399.5 1344.5,395.5 1346.5,399.5 1348.5,395.5 1350.5,395.5 1353.5,391.5 1355.5,395.5 1357.5,399.5 1359.5,395.5 1361.5,395.5 1363.5,395.5 1366.5,395.5 1368.5,399.5 1370.5,399.5 1372.5,391.5 1374.5,395.5 1376.5,395.5 1379.5,399.5 1381.5,395.5 1383.5,395.5 1385.5,395.5 1387.5,399.5 1390.5,395.5 1392.5,395.5 1394.5,399.5 1396.5,395.5 1398.5,391.5 1400.5,259.5 1403.5,259.5 1405.5,259.5 1407.5,259.5 1409.5,263.5 1411.5,263.5 1413.5,255.5 1416.5,259.5 1418.5,259.5 1420.5,259.5 1422.5,263.5 1424.5,263.5 1427.5,259.5 1429.5,259.5 1431.5,263.5 1433.5,259.5 1435.5,259.5 1437.5,259.5 1440.5,263.5 1442.5,259.5 1444.5,255.5 1446.5,259.5 1448.5,255.5 1450.5,259.5 1453.5,255.5 1455.5,255.5 1457.5,263.5 1459.5,259.5 1461.5,268.5 1464.5,259.5 1466.5,259.5 1468.5,259.5 1470.5,259.5 1472.5,259.5 1474.5,259.5 1477.5,259.5 1479.5,263.5 1481.5,263.5 1483.5,259.5 1485.5,259.5 1488.5,259.5 1490.5,259.5 1492.5,259.5 1494.5,259.5 1496.5,259.5 1498.5,255.5 1501.5,263.5 1503.5,263.5 1505.5,263.5 1507.5,263.5 1509.5,259.5 1511.5,259.5 1514.5,263.5 1516.5,263.5 1518.5,255.5 1520.5,259.5 1522.5,268.5 1525.5,259.5 1527.5,259.5 1529.5,255.5 1531.5,259.5 1533.5,263.5 1535.5,259.5 1538.5,259.5 1540.5,259.5 1542.5,255.5 1544.5,259.5 1546.5,259.5 1548.5,259.5 1551.5,259.5 1553.5,255.5 1555.5,250.5 1557.5,259.5 1559.5,259.5 1562.5,259.5 1564.5,259.5 1566.5,259.5 1568.5,259.5 1570.5,259.5 1572.5,259.5 1575.5,259.5 1577.5,259.5 1579.5,263.5 1581.5,250.5 1583.5,255.5 1585.5,259.5 1588.5,259.5 1590.5,250.5 1592.5,259.5 1594.5,259.5 1596.5,263.5 1599.5,259.5 1601.5,259.5 1603.5,259.5 1605.5,259.5 1607.5,263.5 1609.5,263.5 1612.5,255.5 1614.5,263.5 1616.5,259.5 1618.5,255.5 1620.5,255.5 1622.5,259.5 1625.5,259.5 1627.5,255.5 1629.5,259.5 1631.5,263.5 1633.5,263.5 1636.5,259.5 1638.5,259.5 1640.5,259.5 1642.5,259.5 1644.5,259.5 1646.5,259.5 1649.5,259.5 1651.5,255.5 1653.5,255.5 1655.5,263.5 1657.5,259.5 1659.5,259.5 1662.5,259.5 1664.5,263.5 1666.5,259.5 1668.5,263.5 1670.5,259.5 1673.5,255.5 1675.5,395.5 1677.5,399.5 1679.5,395.5 1681.5,391.5 1683.5,395.5 1686.5,395.5 1688.5,395.5 1690.5,395.5 1692.5,395.5 1694.5,395.5 1697.5,395.5 1699.5,395.5 1701.5,399.5 1703.5,395.5 1705.5,399.5 1707.5,399.5 1710.5,395.5 1712.5,391.5 1714.5,399.5 1716.5,395.5 1718.5,399.5 1720.5,399.5 1723.5,395.5 1725.5,395.5 1727.5,399.5 1729.5,391.5 1731.5,399.5 1734.5,404.5 1736.5,391.5 1738.5,395.5 1740.5,399.5 1742.5,399.5 1744.5,399.5 1747.5,391.5 1749.5,395.5 1751.5,395.5 1753.5,395.5 1755.5,395.5 1757.5,399.5 1760.5,391.5 1762.5,399.5 1764.5,395.5 1766.5,391.5 1768.5,399.5 1771.5,395.5 1773.5,395.5 1775.5,395.5 1777.5,399.5 1779.5,395.5 1781.5,395.5 1784.5,391.5 1786.5,395.5 1788.5,391.5 1790.5,391.5 1792.5,395.5 1794.5,395.5 1797.5,395.5 1799.5,399.5 1801.5,391.5 1803.5,399.5 1805.5,395.5 1808.5,399.5 1810.5,395.5 1812.5,395.5 1814.5,399.5 1816.5,391.5 1818.5,399.5 1821.5,399.5 1823.5,395.5 1825.5,395.5 1827.5,395.5 1829.5,395.5 1831.5,395.5 1834.5,399.5 1836.5,391.5 1838.5,395.5 1840.5,395.5 1842.5,395.5 1845.5,395.5 1847.5,395.5 1849.5,395.5 1851.5,391.5 1853.5,391.5 1855.5,399.5 1858.5,399.5 1860.5,395.5 1862.5,395.5 1864.5,395.5 1866.5,395.5 1869.5,399.5 1871.5,395.5 1873.5,399.5 1875.5,399.5 1877.5,395.5 1879.5,395.5 1882.5,391.5 1884.5,391.5 1886.5,391.5 1888.5,395.5 1890.5,391.5 1892.5,395.5 1895.5,399.5 1897.5,395.5 1899.5,391.5 1901.5,399.5 1903.5,395.5 1906.5,395.5 1908.5,391.5 1910.5,395.5 1912.5,391.5 1914.5,395.5 1916.5,395.5 1919.5,395.5 1921.5,395.5 1923.5,399.5 1925.5,395.5 1927.5,395.5 1929.5,395.5 1932.5,391.5 1934.5,399.5 1936.5,391.5 1938.5,399.5 1940.5,391.5 1943.5,395.5 1945.5,395.5 1947.5,255.5 1949.5,259.5 1951.5,259.5 1953.5,263.5 1956.5,263.5 1958.5,263.5 1960.5,259.5 1962.5,259.5 1964.5,259.5 1966.5,250.5 1969.5,263.5 1971.5,259.5 1973.5,259.5 1975.5,259.5 1977.5,263.5 1980.5,259.5 1982.5,263.5 1984.5,263.5 1986.5,259.5 1988.5,263.5 1990.5,255.5 1993.5,259.5 1995.5,259.5 1997.5,259.5 1999.5,263.5 2001.5,259.5 2003.5,259.5 2006.5,255.5 2008.5,250.5 2010.5,259.5 2012.5,263.5 2014.5,259.5 2017.5,259.5 2019.5,259.5 2021.5,263.5 2023.5,259.5 2025.5,259.5 2027.5,263.5 2030.5,255.5 2032.5,263.5 2034.5,259.5 2036.5,259.5 2038.5,255.5 2041.5,259.5 2043.5,259.5 2045.5,263.5 2047.5,259.5 2049.5,263.5 2051.5,259.5 2054.5,255.5 2056.5,259.5 2058.5,255.5 2060.5,255.5 2062.5,259.5 2064.5,259.5 2067.5,263.5 2069.5,259.5 2071.5,259.5 2073.5,259.5 2075.5,263.5 2078.5,263.5 2080.5,255.5 2082.5,259.5 2084.5,259.5 2086.5,255.5 2088.5,259.5 2091.5,259.5 2093.5,263.5 2095.5,255.5 2097.5,263.5 2099.5,255.5 2101.5,259.5 2104.5,250.5 2106.5,259.5 2108.5,255.5 2110.5,255.5 2112.5,263.5 2115.5,255.5 2117.5,259.5 2119.5,263.5 2121.5,263.5 2123.5,259.5 2125.5,255.5 2128.5,259.5 2130.5,255.5 2132.5,259.5 2134.5,259.5 2136.5,259.5 2138.5,263.5 2141.5,255.5 2143.5,255.5 2145.5,255.5 2147.5,259.5 2149.5,259.5 2152.5,255.5 2154.5,259.5 2156.5,259.5 2158.5,259.5 2160.5,259.5 2162.5,255.5 2165.5,263.5 2167.5,259.5 2169.5,259.5 2171.5,263.5 2173.5,255.5 2175.5,259.5 2178.5,259.5 2180.5,255.5 2182.5,259.5 2184.5,263.5 2186.5,255.5 2189.5,259.5 2191.5,259.5 2193.5,259.5 2195.5,259.5 2197.5,255.5 2199.5,263.5 2202.5,259.5 2204.5,263.5 2206.5,259.5 2208.5,259.5 2210.5,263.5 2213.5,259.5" fill="none" stroke="#ffff00" stroke-width="1.5" stroke-linejoin="bevel" shape-rendering="crispEdges"/>
<polyline points="38.5,612.5 40.5,608.5 42.5,608.5 44.5,612.5 46.5,612.5 48.5,616.5 51.5,616.5 53.5,612.5 55.5,612.5 57.5,612.5 59.5,612.5 61.5,612.5 64.5,608.5 66.5,612.5 68.5,616.5 70.5,612.5 72.5,612.5 75.5,612.5 77.5,621.5 79.5,608.5 81.5,612.5 83.5,612.5 85.5,612.5 88.5,612.5 90.5,616.5 92.5,612.5 94.5,612.5 96.5,616.5 98.5,612.5 101.5,616.5 103.5,612.5 105.5,612.5 107.5,612.5 109.5,612.5 112.5,612.5 114.5,612.5 116.5,616.5 118.5,612.5 120.5,608.5 122.5,612.5 125.5,616.5 127.5,616.5 129.5,608.5 131.5,608.5 133.5,608.5 135.5,608.5 138.5,612.5 140.5,612.5 142.5,616.5 144.5,612.5 146.5,616.5 149.5,616.5 151.5,612.5 153.5,612.5 155.5,612.5 157.5,612.5 159.5,621.5 162.5,612.5 164.5,616.5 166.5,612.5 168.5,608.5 170.5,616.5 172.5,612.5 175.5,612.5 177.5,608.5 179.5,612.5 181.5,612.5 183.5,612.5 186.5,616.5 188.5,612.5 190.5,608.5 192.5,608.5 194.5,616.5 196.5,612.5 199.5,608.5 201.5,616.5 203.5,612.5 205.5,612.5 207.5,616.5 209.5,612.5 212.5,612.5 214.5,612.5 216.5,612.5 218.5,612.5 220.5,608.5 223.5,612.5 225.5,616.5 227.5,612.5 229.5,608.5 231.5,612.5 233.5,612.5 236.5,612.5 238.5,608.5 240.5,616.5 242.5,612.5 244.5,612.5 247.5,612.5 249.5,612.5 251.5,608.5 253.5,612.5 255.5,612.5 257.5,616.5 260.5,608.5 262.5,612.5 264.5,612.5 266.5,612.5 268.5,616.5 270.5,608.5 273.5,612.5 275.5,612.5 277.5,608.5 279.5,612.5 281.5,612.5 284.5,608.5 286.5,616.5 288.5,612.5 290.5,616.5 292.5,616.5 294.5,612.5 297.5,612.5 299.5,612.5 301.5,608.5 303.5,612.5 305.5,480.5 307.5,476.5 310.5,476.5 312.5,472.5 314.5,476.5 316.5,472.5 318.5,476.5 321.5,476.5 323.5,472.5 325.5,476.5 327.5,476.5 329.5,476.5 331.5,480.5 334.5,476.5 336.5,472.5 338.5,472.5 340.5,480.5 342.5,476.5 344.5,476.5 347.5,476.5 349.5,476.5 351.5,472.5 353.5,480.5 355.5,476.5 358.5,476.5 360.5,476.5 362.5,476.5 364.5,480.5 366.5,476.5 368.5,480.5 371.5,472.5 373.5,476.5 375.5,480.5 377.5,476.5 379.5,472.5 381.5,472.5 384.5,472.5 386.5,476.5 388.5,472.5 390.5,476.5 392.5,480.5 395.5,476.5 397.5,480.5 399.5,476.5 401.5,476.5 403.5,480.5 405.5,476.5 408.5,480.5 410.5,472.5 412.5,472.5 414.5,476.5 416.5,476.5 419.5,472.5 421.5,485.5 423.5,480.5 425.5,476.5 427.5,472.5 429.5,476.5 432.5,472.5 434.5,480.5 436.5,476.5 438.5,472.5 440.5,476.5 442.5,476.5 445.5,476.5 447.5,480.5 449.5,480.5 451.5,476.5 453.5,476.5 456.5,467.5 458.5,480.5 460.5,472.5 462.5,472.5 464.5,480.5 466.5,480.5 469.5,476.5 471.5,480.5 473.5,472.5 475.5,472.5 477.5,476.5 479.5,476.5 482.5,480.5 484.5,476.5 486.5,476.5 488.5,472.5 490.5,476.5 493.5,476.5 495.5,472.5 497.5,476.5 499.5,476.5 501.5,480.5 503.5,476.5 506.5,476.5 508.5,476.5 510.5,480.5 512.5,472.5 514.5,476.5 516.5,476.5 519.5,476.5 521.5,472.5 523.5,476.5 525.5,476.5 527.5,472.5 530.5,472.5 532.5,472.5 534.5,472.5 536.5,480.5 538.5,476.5 540.5,476.5 543.5,476.5 545.5,476.5 547.5,476.5 549.5,476.5 551.5,472.5 553.5,480.5 556.5,476.5 558.5,476.5 560.5,480.5 562.5,472.5 564.5,476.5 567.5,476.5 569.5,476.5 571.5,472.5 573.5,476.5 575.5,472.5 577.5,480.5 580.5,603.5 582.5,608.5 584.5,612.5 586.5,612.5 588.5,608.5 591.5,608.5 593.5,612.5 595.5,616.5 597.5,612.5 599.5,612.5 601.5,616.5 604.5,612.5 606.5,608.5 608.5,612.5 610.5,608.5 612.5,612.5 614.5,612.5 617.5,616.5 619.5,612.5 621.5,612.5 623.5,608.5 625.5,612.5 628.5,612.5 630.5,612.5 632.5,612.5 634.5,612.5 636.5,616.5 638.5,612.5 641.5,616.5 643.5,616.5 645.5,608.5 647.5,612.5 649.5,612.5 651.5,612.5 654.5,608.5 656.5,608.5 658.5,612.5 660.5,612.5 662.5,612.5 665.5,612.5 667.5,612.5 669.5,612.5 671.5,616.5 673.5,612.5 675.5,612.5 678.5,616.5 680.5,616.5 682.5,612.5 684.5,612.5 686.5,612.5 688.5,612.5 691.5,612.5 693.5,612.5 695.5,616.5 697.5,616.5 699.5,616.5 702.5,616.5 704.5,612.5 706.5,608.5 708.5,612.5 710.5,616.5 712.5,608.5 715.5,608.5 717.5,612.5 719.5,612.5 721.5,616.5 723.5,608.5 725.5,608.5 728.5,612.5 730.5,616.5 732.5,612.5 734.5,612.5 736.5,612.5 739.5,612.5 741.5,608.5 743.5,616.5 745.5,612.5 747.5,612.5 749.5,612.5 752.5,608.5 754.5,612.5 756.5,612.5 758.5,612.5 760.5,612.5 763.5,612.5 765.5,608.5 767.5,608.5 769.5,612.5 771.5,612.5 773.5,616.5 776.5,612.5 778.5,612.5 780.5,608.5 782.5,608.5 784.5,612.5 786.5,612.5 789.5,616.5 791.5,612.5 793.5,612.5 795.5,612.5 797.5,612.5 800.5,608.5 802.5,612.5 804.5,608.5 806.5,612.5 808.5,612.5 810.5,616.5 813.5,616.5 815.5,616.5 817.5,608.5 819.5,612.5 821.5,608.5 823.5,616.5 826.5,612.5 828.5,616.5 830.5,616.5 832.5,612.5 834.5,616.5 837.5,616.5 839.5,616.5 841.5,612.5 843.5,612.5 845.5,608.5 847.5,608.5 850.5,608.5 852.5,472.5 854.5,476.5 856.5,480.5 858.5,476.5 860.5,480.5 863.5,476.5 865.5,485.5 867.5,472.5 869.5,472.5 871.5,480.5 874.5,476.5 876.5,476.5 878.5,476.5 880.5,476.5 882.5,476.5 884.5,480.5 887.5,476.5 889.5,476.5 891.5,476.5 893.5,476.5 895.5,472.5 897.5,476.5 900.5,472.5 902.5,476.5 904.5,476.5 906.5,480.5 908.5,476.5 911.5,480.5 913.5,476.5 915.5,476.5 917.5,476.5 919.5,476.5 921.5,472.5 924.5,472.5 926.5,472.5 928.5,472.5 930.5,476.5 932.5,476.5 934.5,476.5 937.5,476.5 939.5,476.5 941.5,476.5 943.5,476.5 945.5,476.5 948.5,480.5 950.5,472.5 952.5,480.5 954.5,472.5 956.5,472.5 958.5,485.5 961.5,476.5 963.5,476.5 965.5,472.5 967.5,480.5 969.5,476.5 972.5,480.5 974.5,476.5 976.5,476.5 978.5,480.5 980.5,476.5 982.5,472.5 985.5,472.5 987.5,476.5 989.5,480.5 991.5,476.5 993.5,476.5 995.5,476.5 998.5,476.5 1000.5,476.5 1002.5,472.5 1004.5,476.5 1006.5,476.5 1009.5,476.5 1011.5,472.5 1013.5,472.5 1015.5,476.5 1017.5,476.5 1019.5,480.5 1022.5,472.5 1024.5,476.5 1026.5,480.5 1028.5,472.5 1030.5,476.5 1032.5,476.5 1035.5,472.5 1037.5,480.5 1039.5,476.5 1041.5,472.5 1043.5,472.5 1046.5,476.5 1048.5,476.5 1050.5,472.5 1052.5,476.5 1054.5,476.5 1056.5,480.5 1059.5,480.5 1061.5,476.5 1063.5,476.5 1065.5,480.5 1067.5,476.5 1069.5,476.5 1072.5,480.5 1074.5,476.5 1076.5,472.5 1078.5,472.5 1080.5,476.5 1083.5,467.5 1085.5,472.5 1087.5,476.5 1089.5,476.5 1091.5,480.5 1093.5,476.5 1096.5,472.5 1098.5,472.5 1100.5,476.5 1102.5,476.5 1104.5,472.5 1106.5,472.5 1109.5,476.5 1111.5,476.5 1113.5,476.5 1115.5,480.5 1117.5,476.5 1120.5,472.5 1122.5,476.5 1124.5,476.5 1126.5,608.5 1128.5,608.5 1130.5,612.5 1133.5,612.5 1135.5,612.5 1137.5,616.5 1139.5,612.5 1141.5,612.5 1144.5,612.5 1146.5,612.5 1148.5,612.5 1150.5,612.5 1152.5,608.5 1154.5,616.5 1157.5,612.5 1159.5,612.5 1161.5,612.5 1163.5,612.5 1165.5,612.5 1167.5,608.5 1170.5,612.5 1172.5,608.5 1174.5,612.5 1176.5,612.5 1178.5,612.5 1181.5,608.5 1183.5,612.5 1185.5,612.5 1187.5,612.5 1189.5,616.5 1191.5,612.5 1194.5,608.5 1196.5,612.5 1198.5,612.5 1200.5,612.5 1202.5,616.5 1204.5,612.5 1207.5,616.5 1209.5,612.5 1211.5,612.5 1213.5,616.5 1215.5,608.5 1218.5,612.5 1220.5,612.5 1222.5,616.5 1224.5,612.5 1226.5,616.5 1228.5,608.5 1231.5,608.5 1233.5,612.5 1235.5,612.5 1237.5,612.5 1239.5,608.5 1241.5,608.5 1244.5,612.5 1246.5,616.5 1248.5,612.5 1250.5,612.5 1252.5,612.5 1255.5,612.5 1257.5,616.5 1259.5,608.5 1261.5,612.5 1263.5,612.5 1265.5,612.5 1268.5,608.5 1270.5,612.5 1272.5,612.5 1274.5,612.5 1276.5,616.5 1278.5,612.5 1281.5,608.5 1283.5,608.5 1285.5,612.5 1287.5,612.5 1289.5,612.5 1292.5,612.5 1294.5,612.5 1296.5,612.5 1298.5,612.5 1300.5,612.5 1302.5,616.5 1305.5,612.5 1307.5,612.5 1309.5,612.5 1311.5,612.5 1313.5,616.5 1316.5,612.5 1318.5,608.5 1320.5,612.5 1322.5,608.5 1324.5,612.5 1326.5,608.5 1329.5,612.5 1331.5,612.5 1333.5,612.5 1335.5,608.5 1337.5,616.5 1339.5,608.5 1342.5,612.5 1344.5,612.5 1346.5,616.5 1348.5,616.5 1350.5,612.5 1353.5,608.5 1355.5,608.5 1357.5,608.5 1359.5,616.5 1361.5,616.5 1363.5,612.5 1366.5,621.5 1368.5,612.5 1370.5,616.5 1372.5,616.5 1374.5,608.5 1376.5,612.5 1379.5,612.5 1381.5,616.5 1383.5,612.5 1385.5,616.5 1387.5,608.5 1390.5,612.5 1392.5,612.5 1394.5,612.5 1396.5,612.5 1398.5,476.5 1400.5,476.5 1403.5,472.5 1405.5,472.5 1407.5,476.5 1409.5,476.5 1411.5,480.5 1413.5,476.5 1416.5,480.5 1418.5,472.5 1420.5,476.5 1422.5,476.5 1424.5,472.5 1427.5,472.5 1429.5,476.5 1431.5,476.5 1433.5,476.5 1435.5,476.5 1437.5,476.5 1440.5,476.5 1442.5,472.5 1444.5,472.5 1446.5,480.5 1448.5,476.5 1450.5,472.5 1453.5,480.5 1455.5,476.5 1457.5,476.5 1459.5,476.5 1461.5,476.5 1464.5,480.5 1466.5,480.5 1468.5,476.5 1470.5,480.5 1472.5,480.5 1474.5,476.5 1477.5,476.5 1479.5,476.5 1481.5,472.5 1483.5,472.5 1485.5,476.5 1488.5,476.5 1490.5,476.5 1492.5,480.5 1494.5,476.5 1496.5,480.5 1498.5,476.5 1501.5,480.5 1503.5,472.5 1505.5,476.5 1507.5,476.5 1509.5,476.5 1511.5,476.5 1514.5,472.5 1516.5,476.5 1518.5,476.5 1520.5,476.5 1522.5,472.5 1525.5,472.5 1527.5,476.5 1529.5,476.5 1531.5,472.5 1533.5,476.5 1535.5,476.5 1538.5,472.5 1540.5,476.5 1542.5,480.5 1544.5,476.5 1546.5,480.5 1548.5,476.5 1551.5,476.5 1553.5,476.5 1555.5,480.5 1557.5,472.5 1559.5,476.5 1562.5,480.5 1564.5,472.5 1566.5,480.5 1568.5,476.5 1570.5,472.5 1572.5,480.5 1575.5,476.5 1577.5,472.5 1579.5,476.5 1581.5,476.5 1583.5,476.5 1585.5,476.5 1588.5,480.5 1590.5,476.5 1592.5,480.5 1594.5,480.5 1596.5,480.5 1599.5,480.5 1601.5,472.5 1603.5,476.5 1605.5,472.5 1607.5,467.5 1609.5,472.5 1612.5,476.5 1614.5,480.5 1616.5,480.5 1618.5,485.5 1620.5,476.5 1622.5,476.5 1625.5,480.5 1627.5,480.5 1629.5,480.5 1631.5,476.5 1633.5,476.5 1636.5,476.5 1638.5,472.5 1640.5,480.5 1642.5,476.5 1644.5,480.5 1646.5,476.5 1649.5,480.5 1651.5,472.5 1653.5,476.5 1655.5,472.5 1657.5,476.5 1659.5,472.5 1662.5,476.5 1664.5,476.5 1666.5,480.5 1668.5,472.5 1670.5,480.5 1673.5,612.5 1675.5,612.5 1677.5,612.5 1679.5,612.5 1681.5,612.5 1683.5,612.5 1686.5,612.5 1688.5,612.5 1690.5,612.5 1692.5,608.5 1694.5,612.5 1697.5,612.5 1699.5,612.5 1701.5,616.5 1703.5,616.5 1705.5,612.5 1707.5,612.5 1710.5,612.5 1712.5,616.5 1714.5,612.5 1716.5,616.5 1718.5,612.5 1720.5,616.5 1723.5,612.5 1725.5,608.5 1727.5,612.5 1729.5,612.5 1731.5,612.5 1734.5,608.5 1736.5,616.5 1738.5,616.5 1740.5,616.5 1742.5,612.5 1744.5,612.5 1747.5,603.5 1749.5,608.5 1751.5,612.5 1753.5,612.5 1755.5,616.5 1757.5,608.5 1760.5,612.5 1762.5,612.5 1764.5,612.5 1766.5,608.5 1768.5,608.5 1771.5,612.5 1773.5,608.5 1775.5,612.5 1777.5,612.5 1779.5,612.5 1781.5,612.5 1784.5,612.5 1786.5,608.5 1788.5,621.5 1790.5,612.5 1792.5,608.5 1794.5,616.5 1797.5,612.5 1799.5,612.5 1801.5,612.5 1803.5,612.5 1805.5,612.5 1808.5,612.5 1810.5,608.5 1812.5,616.5 1814.5,612.5 1816.5,612.5 1818.5,612.5 1821.5,616.5 1823.5,612.5 1825.5,608.5 1827.5,612.5 1829.5,608.5 1831.5,608.5 1834.5,608.5 1836.5,612.5 1838.5,616.5 1840.5,616.5 1842.5,612.5 1845.5,616.5 1847.5,608.5 1849.5,612.5 1851.5,612.5 1853.5,616.5 1855.5,612.5 1858.5,612.5 1860.5,612.5 1862.5,612.5 1864.5,608.5 1866.5,608.5 1869.5,612.5 1871.5,612.5 1873.5,616.5 1875.5,612.5 1877.5,608.5 1879.5,612.5 1882.5,612.5 1884.5,612.5 1886.5,612.5 1888.5,612.5 1890.5,612.5 1892.5,612.5 1895.5,608.5 1897.5,612.5 1899.5,616.5 1901.5,612.5 1903.5,612.5 1906.5,608.5 1908.5,612.5 1910.5,608.5 1912.5,616.5 1914.5,612.5 1916.5,612.5 1919.5,612.5 1921.5,612.5 1923.5,612.5 1925.5,612.5 1927.5,612.5 1929.5,608.5 1932.5,616.5 1934.5,608.5 1936.5,616.5 1938.5,616.5 1940.5,612.5 1943.5,608.5 1945.5,476.5 1947.5,480.5 1949.5,472.5 1951.5,476.5 1953.5,476.5 1956.5,476.5 1958.5,480.5 1960.5,476.5 1962.5,472.5 1964.5,480.5 1966.5,472.5 1969.5,476.5 1971.5,476.5 1973.5,480.5 1975.5,480.5 1977.5,476.5 1980.5,476.5 1982.5,480.5 1984.5,472.5 1986.5,476.5 1988.5,476.5 1990.5,480.5 1993.5,476.5 1995.5,476.5 1997.5,472.5 1999.5,480.5 2001.5,480.5 2003.5,476.5 2006.5,480.5 2008.5,480.5 2010.5,476.5 2012.5,476.5 2014.5,476.5 2017.5,472.5 2019.5,476.5 2021.5,476.5 2023.5,480.5 2025.5,476.5 2027.5,472.5 2030.5,476.5 2032.5,480.5 2034.5,476.5 2036.5,476.5 2038.5,480.5 2041.5,472.5 2043.5,476.5 2045.5,480.5 2047.5,476.5 2049.5,480.5 2051.5,480.5 2054.5,476.5 2056.5,476.5 2058.5,476.5 2060.5,476.5 2062.5,476.5 2064.5,476.5 2067.5,472.5 2069.5,476.5 2071.5,472.5 2073.5,472.5 2075.5,472.5 2078.5,476.5 2080.5,480.5 2082.5,476.5 2084.5,476.5 2086.5,472.5 2088.5,476.5 2091.5,467.5 2093.5,472.5 2095.5,480.5 2097.5,476.5 2099.5,476.5 2101.5,476.5 2104.5,476.5 2106.5,476.5 2108.5,476.5 2110.5,472.5 2112.5,476.5 2115.5,476.5 2117.5,476.5 2119.5,480.5 2121.5,476.5 2123.5,472.5 2125.5,476.5 2128.5,472.5 2130.5,472.5 2132.5,480.5 2134.5,472.5 2136.5,476.5 2138.5,472.5 2141.5,476.5 2143.5,472.5 2145.5,476.5 2147.5,472.5 2149.5,476.5 2152.5,472.5 2154.5,476.5 2156.5,476.5 2158.5,476.5 2160.5,480.5 2162.5,476.5 2165.5,476.5 2167.5,480.5 2169.5,480.5 2171.5,476.5 2173.5,472.5 2175.5,472.5 2178.5,480.5 2180.5,476.5 2182.5,476.5 2184.5,480.5 2186.5,476.5 2189.5,476.5 2191.5,472.5 2193.5,480.5 2195.5,476.5 2197.5,472.5 2199.5,476.5 2202.5,476.5 2204.5,476.5 2206.5,472.5 2208.5,472.5 2210.5,480.5 2213.5,476.5" fill="none" stroke="#8c8c8c" stroke-width="1" stroke-linejoin="bevel" shape-rendering="crispEdges"/>
<polyline points="38.5,616.5 40.5,612.5 42.5,612.5 44.5,603.5 46.5,608.5 48.5,608.5 51.5,616.5 53.5,616.5 55.5,612.5 57.5,612.5 59.5,612.5 61.5,616.5 64.5,612.5 66.5,612.5 68.5,608.5 70.5,612.5 72.5,616.5 75.5,612.5 77.5,612.5 79.5,612.5 81.5,612.5 83.5,612.5 85.5,612.5 88.5,612.5 90.5,608.5 92.5,616.5 94.5,616.5 96.5,612.5 98.5,612.5 101.5,612.5 103.5,612.5 105.5,612.5 107.5,616.5 109.5,616.5 112.5,616.5 114.5,612.5 116.5,612.5 118.5,612.5 120.5,608.5 122.5,612.5 125.5,612.5 127.5,616.5 129.5,612.5 131.5,612.5 133.5,612.5 135.5,616.5 138.5,612.5 140.5,616.5 142.5,612.5 144.5,612.5 146.5,612.5 149.5,612.5 151.5,612.5 153.5,612.5 155.5,612.5 157.5,608.5 159.5,616.5 162.5,612.5 164.5,612.5 166.5,612.5 168.5,612.5 170.5,608.5 172.5,612.5 175.5,616.5 177.5,612.5 179.5,612.5 181.5,612.5 183.5,612.5 186.5,612.5 188.5,612.5 190.5,612.5 192.5,612.5 194.5,616.5 196.5,608.5 199.5,612.5 201.5,612.5 203.5,612.5 205.5,608.5 207.5,608.5 209.5,608.5 212.5,612.5 214.5,612.5 216.5,612.5 218.5,612.5 220.5,608.5 223.5,612.5 225.5,612.5 227.5,608.5 229.5,612.5 231.5,612.5 233.5,608.5 236.5,616.5 238.5,612.5 240.5,612.5 242.5,608.5 244.5,616.5 247.5,612.5 249.5,616.5 251.5,612.5 253.5,612.5 255.5,612.5 257.5,612.5 260.5,612.5 262.5,612.5 264.5,608.5 266.5,608.5 268.5,608.5 270.5,612.5 273.5,612.5 275.5,612.5 277.5,608.5 279.5,621.5 281.5,612.5 284.5,612.5 286.5,612.5 288.5,608.5 290.5,608.5 292.5,608.5 294.5,612.5 297.5,612.5 299.5,616.5 301.5,612.5 303.5,612.5 305.5,612.5 307.5,480.5 310.5,472.5 312.5,476.5 314.5,472.5 316.5,472.5 318.5,476.5 321.5,472.5 323.5,476.5 325.5,476.5 327.5,480.5 329.5,476.5 331.5,480.5 334.5,480.5 336.5,476.5 338.5,476.5 340.5,480.5 342.5,476.5 344.5,476.5 347.5,476.5 349.5,476.5 351.5,480.5 353.5,472.5 355.5,476.5 358.5,472.5 360.5,476.5 362.5,480.5 364.5,476.5 366.5,472.5 368.5,476.5 371.5,476.5 373.5,476.5 375.5,476.5 377.5,480.5 379.5,472.5 381.5,472.5 384.5,472.5 386.5,476.5 388.5,480.5 390.5,480.5 392.5,472.5 395.5,472.5 397.5,476.5 399.5,480.5 401.5,476.5 403.5,476.5 405.5,476.5 408.5,476.5 410.5,480.5 412.5,476.5 414.5,476.5 416.5,476.5 419.5,476.5 421.5,476.5 423.5,476.5 425.5,480.5 427.5,476.5 429.5,472.5 432.5,476.5 434.5,472.5 436.5,476.5 438.5,480.5 440.5,476.5 442.5,476.5 445.5,476.5 447.5,480.5 449.5,476.5 451.5,476.5 453.5,480.5 456.5,476.5 458.5,476.5 460.5,472.5 462.5,476.5 464.5,476.5 466.5,476.5 469.5,472.5 471.5,476.5 473.5,476.5 475.5,480.5 477.5,476.5 479.5,476.5 482.5,476.5 484.5,480.5 486.5,476.5 488.5,476.5 490.5,476.5 493.5,476.5 495.5,472.5 497.5,480.5 499.5,476.5 501.5,476.5 503.5,476.5 506.5,480.5 508.5,472.5 510.5,476.5 512.5,476.5 514.5,476.5 516.5,476.5 519.5,480.5 521.5,480.5 523.5,476.5 525.5,480.5 527.5,480.5 530.5,480.5 532.5,476.5 534.5,476.5 536.5,476.5 538.5,476.5 540.5,476.5 543.5,476.5 545.5,476.5 547.5,472.5 549.5,480.5 551.5,480.5 553.5,476.5 556.5,476.5 558.5,476.5 560.5,476.5 562.5,480.5 564.5,472.5 567.5,476.5 569.5,476.5 571.5,476.5 573.5,476.5 575.5,476.5 577.5,476.5 580.5,476.5 582.5,612.5 584.5,612.5 586.5,608.5 588.5,612.5 591.5,612.5 593.5,608.5 595.5,616.5 597.5,612.5 599.5,612.5 601.5,612.5 604.5,612.5 606.5,616.5 608.5,612.5 610.5,612.5 612.5,608.5 614.5,616.5 617.5,612.5 619.5,616.5 621.5,608.5 623.5,612.5 625.5,612.5 628.5,616.5 630.5,612.5 632.5,612.5 634.5,608.5 636.5,612.5 638.5,616.5 641.5,612.5 643.5,608.5 645.5,612.5 647.5,616.5 649.5,608.5 651.5,612.5 654.5,608.5 656.5,608.5 658.5,608.5 660.5,612.5 662.5,616.5 665.5,612.5 667.5,608.5 669.5,612.5 671.5,612.5 673.5,608.5 675.5,612.5 678.5,612.5 680.5,612.5 682.5,616.5 684.5,608.5 686.5,612.5 688.5,612.5 691.5,616.5 693.5,616.5 695.5,612.5 697.5,608.5 699.5,612.5 702.5,612.5 704.5,616.5 706.5,612.5 708.5,612.5 710.5,612.5 712.5,608.5 715.5,612.5 717.5,616.5 719.5,612.5 721.5,616.5 723.5,612.5 725.5,612.5 728.5,612.5 730.5,608.5 732.5,612.5 734.5,612.5 736.5,621.5 739.5,612.5 741.5,616.5 743.5,612.5 745.5,612.5 747.5,612.5 749.5,612.5 752.5,612.5 754.5,612.5 756.5,612.5 758.5,612.5 760.5,612.5 763.5,612.5 765.5,612.5 767.5,608.5 769.5,612.5 771.5,612.5 773.5,612.5 776.5,616.5 778.5,612.5 780.5,612.5 782.5,612.5 784.5,616.5 786.5,612.5 789.5,616.5 791.5,608.5 793.5,612.5 795.5,612.5 797.5,608.5 800.5,612.5 802.5,616.5 804.5,612.5 806.5,612.5 808.5,612.5 810.5,612.5 813.5,612.5 815.5,616.5 817.5,616.5 819.5,612.5 821.5,616.5 823.5,608.5 826.5,612.5 828.5,612.5 830.5,616.5 832.5,616.5 834.5,612.5 837.5,612.5 839.5,612.5 841.5,608.5 843.5,616.5 845.5,612.5 847.5,612.5 850.5,608.5 852.5,616.5 854.5,476.5 856.5,476.5 858.5,472.5 860.5,476.5 863.5,480.5 865.5,476.5 867.5,480.5 869.5,476.5 871.5,476.5 874.5,476.5 876.5,476.5 878.5,476.5 880.5,472.5 882.5,480.5 884.5,472.5 887.5,476.5 889.5,472.5 891.5,472.5 893.5,476.5 895.5,476.5 897.5,476.5 900.5,476.5 902.5,476.5 904.5,476.5 906.5,476.5 908.5,480.5 911.5,476.5 913.5,480.5 915.5,472.5 917.5,476.5 919.5,480.5 921.5,480.5 924.5,476.5 926.5,480.5 928.5,476.5 930.5,476.5 932.5,476.5 934.5,476.5 937.5,480.5 939.5,480.5 941.5,476.5 943.5,476.5 945.5,476.5 948.5,476.5 950.5,476.5 952.5,476.5 954.5,476.5 956.5,472.5 958.5,476.5 961.5,480.5 963.5,476.5 965.5,476.5 967.5,472.5 969.5,476.5 972.5,476.5 974.5,476.5 976.5,476.5 978.5,476.5 980.5,472.5 982.5,476.5 985.5,472.5 987.5,476.5 989.5,476.5 991.5,476.5 993.5,476.5 995.5,480.5 998.5,476.5 1000.5,476.5 1002.5,476.5 1004.5,476.5 1006.5,480.5 1009.5,480.5 1011.5,476.5 1013.5,476.5 1015.5,476.5 1017.5,472.5 1019.5,476.5 1022.5,476.5 1024.5,472.5 1026.5,476.5 1028.5,472.5 1030.5,472.5 1032.5,480.5 1035.5,476.5 1037.5,476.5 1039.5,476.5 1041.5,476.5 1043.5,476.5 1046.5,476.5 1048.5,476.5 1050.5,476.5 1052.5,476.5 1054.5,476.5 1056.5,476.5 1059.5,476.5 1061.5,476.5 1063.5,476.5 1065.5,476.5 1067.5,476.5 1069.5,472.5 1072.5,472.5 1074.5,472.5 1076.5,476.5 1078.5,472.5 1080.5,476.5 1083.5,476.5 1085.5,480.5 1087.5,476.5 1089.5,476.5 1091.5,476.5 1093.5,480.5 1096.5,476.5 1098.5,476.5 1100.5,476.5 1102.5,480.5 1104.5,476.5 1106.5,476.5 1109.5,472.5 1111.5,476.5 1113.5,476.5 1115.5,472.5 1117.5,480.5 1120.5,480.5 1122.5,476.5 1124.5,476.5 1126.5,476.5 1128.5,612.5 1130.5,612.5 1133.5,608.5 1135.5,616.5 1137.5,612.5 1139.5,612.5 1141.5,608.5 1144.5,616.5 1146.5,616.5 1148.5,612.5 1150.5,608.5 1152.5,608.5 1154.5,608.5 1157.5,612.5 1159.5,603.5 1161.5,612.5 1163.5,612.5 1165.5,612.5 1167.5,612.5 1170.5,616.5 1172.5,612.5 1174.5,612.5 1176.5,608.5 1178.5,612.5 1181.5,612.5 1183.5,612.5 1185.5,612.5 1187.5,608.5 1189.5,616.5 1191.5,616.5 1194.5,612.5 1196.5,608.5 1198.5,612.5 1200.5,621.5 1202.5,612.5 1204.5,612.5 1207.5,612.5 1209.5,612.5 1211.5,612.5 1213.5,612.5 1215.5,612.5 1218.5,616.5 1220.5,612.5 1222.5,616.5 1224.5,608.5 1226.5,612.5 1228.5,608.5 1231.5,616.5 1233.5,616.5 1235.5,612.5 1237.5,616.5 1239.5,616.5 1241.5,612.5 1244.5,612.5 1246.5,612.5 1248.5,612.5 1250.5,612.5 1252.5,616.5 1255.5,612.5 1257.5,612.5 1259.5,612.5 1261.5,612.5 1263.5,612.5 1265.5,608.5 1268.5,612.5 1270.5,608.5 1272.5,608.5 1274.5,608.5 1276.5,612.5 1278.5,616.5 1281.5,612.5 1283.5,608.5 1285.5,612.5 1287.5,612.5 1289.5,612.5 1292.5,612.5 1294.5,612.5 1296.5,612.5 1298.5,612.5 1300.5,612.5 1302.5,608.5 1305.5,616.5 1307.5,612.5 1309.5,612.5 1311.5,612.5 1313.5,608.5 1316.5,612.5 1318.5,612.5 1320.5,612.5 1322.5,612.5 1324.5,612.5 1326.5,612.5 1329.5,612.5 1331.5,612.5 1333.5,612.5 1335.5,608.5 1337.5,608.5 1339.5,612.5 1342.5,616.5 1344.5,612.5 1346.5,612.5 1348.5,612.5 1350.5,612.5 1353.5,616.5 1355.5,608.5 1357.5,616.5 1359.5,621.5 1361.5,612.5 1363.5,608.5 1366.5,612.5 1368.5,612.5 1370.5,612.5 1372.5,608.5 1374.5,616.5 1376.5,612.5 1379.5,612.5 1381.5,612.5 1383.5,612.5 1385.5,608.5 1387.5,612.5 1390.5,612.5 1392.5,608.5 1394.5,612.5 1396.5,612.5 1398.5,612.5 1400.5,476.5 1403.5,476.5 1405.5,480.5 1407.5,476.5 1409.5,485.5 1411.5,476.5 1413.5,476.5 1416.5,480.5 1418.5,476.5 1420.5,476.5 1422.5,480.5 1424.5,472.5 1427.5,476.5 1429.5,476.5 1431.5,476.5 1433.5,476.5 1435.5,480.5 1437.5,476.5 1440.5,472.5 1442.5,472.5 1444.5,476.5 1446.5,472.5 1448.5,480.5 1450.5,472.5 1453.5,476.5 1455.5,472.5 1457.5,472.5 1459.5,472.5 1461.5,472.5 1464.5,480.5 1466.5,480.5 1468.5,476.5 1470.5,476.5 1472.5,476.5 1474.5,467.5 1477.5,472.5 1479.5,480.5 1481.5,472.5 1483.5,480.5 1485.5,476.5 1488.5,476.5 1490.5,480.5 1492.5,480.5 1494.5,476.5 1496.5,476.5 1498.5,476.5 1501.5,476.5 1503.5,476.5 1505.5,472.5 1507.5,476.5 1509.5,476.5 1511.5,472.5 1514.5,472.5 1516.5,472.5 1518.5,476.5 1520.5,476.5 1522.5,476.5 1525.5,480.5 1527.5,472.5 1529.5,480.5 1531.5,476.5 1533.5,472.5 1535.5,476.5 1538.5,476.5 1540.5,472.5 1542.5,476.5 1544.5,476.5 1546.5,480.5 1548.5,476.5 1551.5,480.5 1553.5,476.5 1555.5,476.5 1557.5,476.5 1559.5,476.5 1562.5,476.5 1564.5,472.5 1566.5,472.5 1568.5,476.5 1570.5,480.5 1572.5,476.5 1575.5,480.5 1577.5,476.5 1579.5,476.5 1581.5,472.5 1583.5,476.5 1585.5,476.5 1588.5,476.5 1590.5,476.5 1592.5,476.5 1594.5,480.5 1596.5,476.5 1599.5,476.5 1601.5,476.5 1603.5,472.5 1605.5,476.5 1607.5,476.5 1609.5,476.5 1612.5,480.5 1614.5,472.5 1616.5,476.5 1618.5,472.5 1620.5,480.5 1622.5,476.5 1625.5,472.5 1627.5,476.5 1629.5,476.5 1631.5,476.5 1633.5,476.5 1636.5,472.5 1638.5,476.5 1640.5,467.5 1642.5,476.5 1644.5,472.5 1646.5,476.5 1649.5,476.5 1651.5,476.5 1653.5,480.5 1655.5,480.5 1657.5,476.5 1659.5,476.5 1662.5,476.5 1664.5,480.5 1666.5,472.5 1668.5,476.5 1670.5,476.5 1673.5,485.5 1675.5,616.5 1677.5,612.5 1679.5,612.5 1681.5,608.5 1683.5,608.5 1686.5,612.5 1688.5,608.5 1690.5,616.5 1692.5,612.5 1694.5,608.5 1697.5,612.5 1699.5,612.5 1701.5,616.5 1703.5,612.5 1705.5,612.5 1707.5,612.5 1710.5,608.5 1712.5,616.5 1714.5,616.5 1716.5,612.5 1718.5,612.5 1720.5,616.5 1723.5,612.5 1725.5,608.5 1727.5,608.5 1729.5,616.5 1731.5,603.5 1734.5,608.5 1736.5,612.5 1738.5,612.5 1740.5,612.5 1742.5,612.5 1744.5,612.5 1747.5,612.5 1749.5,612.5 1751.5,612.5 1753.5,612.5 1755.5,612.5 1757.5,612.5 1760.5,616.5 1762.5,608.5 1764.5,612.5 1766.5,608.5 1768.5,612.5 1771.5,612.5 1773.5,608.5 1775.5,603.5 1777.5,603.5 1779.5,612.5 1781.5,612.5 1784.5,612.5 1786.5,612.5 1788.5,612.5 1790.5,612.5 1792.5,612.5 1794.5,612.5 1797.5,612.5 1799.5,616.5 1801.5,612.5 1803.5,616.5 1805.5,616.5 1808.5,612.5 1810.5,616.5 1812.5,621.5 1814.5,616.5 1816.5,608.5 1818.5,612.5 1821.5,612.5 1823.5,612.5 1825.5,612.5 1827.5,612.5 1829.5,616.5 1831.5,612.5 1834.5,612.5 1836.5,612.5 1838.5,612.5 1840.5,612.5 1842.5,612.5 1845.5,608.5 1847.5,616.5 1849.5,612.5 1851.5,612.5 1853.5,612.5 1855.5,612.5 1858.5,608.5 1860.5,616.5 1862.5,616.5 1864.5,612.5 1866.5,612.5 1869.5,612.5 1871.5,608.5 1873.5,612.5 1875.5,612.5 1877.5,612.5 1879.5,608.5 1882.5,612.5 1884.5,612.5 1886.5,616.5 1888.5,612.5 1890.5,612.5 1892.5,612.5 1895.5,612.5 1897.5,608.5 1899.5,612.5 1901.5,616.5 1903.5,612.5 1906.5,612.5 1908.5,608.5 1910.5,612.5 1912.5,608.5 1914.5,612.5 1916.5,608.5 1919.5,612.5 1921.5,616.5 1923.5,612.5 1925.5,612.5 1927.5,612.5 1929.5,616.5 1932.5,612.5 1934.5,608.5 1936.5,612.5 1938.5,612.5 1940.5,612.5 1943.5,616.5 1945.5,612.5 1947.5,476.5 1949.5,476.5 1951.5,476.5 1953.5,480.5 1956.5,472.5 1958.5,480.5 1960.5,476.5 1962.5,476.5 1964.5,480.5 1966.5,472.5 1969.5,472.5 1971.5,476.5 1973.5,476.5 1975.5,476.5 1977.5,476.5 1980.5,476.5 1982.5,467.5 1984.5,480.5 1986.5,476.5 1988.5,480.5 1990.5,480.5 1993.5,476.5 1995.5,476.5 1997.5,476.5 1999.5,480.5 2001.5,476.5 2003.5,472.5 2006.5,476.5 2008.5,472.5 2010.5,476.5 2012.5,480.5 2014.5,476.5 2017.5,476.5 2019.5,476.5 2021.5,476.5 2023.5,476.5 2025.5,476.5 2027.5,476.5 2030.5,480.5 2032.5,476.5 2034.5,476.5 2036.5,476.5 2038.5,472.5 2041.5,472.5 2043.5,476.5 2045.5,480.5 2047.5,480.5 2049.5,476.5 2051.5,472.5 2054.5,480.5 2056.5,480.5 2058.5,476.5 2060.5,472.5 2062.5,476.5 2064.5,476.5 2067.5,480.5 2069.5,472.5 2071.5,476.5 2073.5,476.5 2075.5,476.5 2078.5,476.5 2080.5,476.5 2082.5,480.5 2084.5,476.5 2086.5,476.5 2088.5,472.5 2091.5,480.5 2093.5,476.5 2095.5,476.5 2097.5,472.5 2099.5,472.5 2101.5,476.5 2104.5,480.5 2106.5,476.5 2108.5,480.5 2110.5,476.5 2112.5,476.5 2115.5,472.5 2117.5,472.5 2119.5,480.5 2121.5,480.5 2123.5,472.5 2125.5,476.5 2128.5,476.5 2130.5,472.5 2132.5,472.5 2134.5,476.5 2136.5,476.5 2138.5,472.5 2141.5,476.5 2143.5,476.5 2145.5,476.5 2147.5,480.5 2149.5,476.5 2152.5,476.5 2154.5,480.5 2156.5,472.5 2158.5,476.5 2160.5,476.5 2162.5,480.5 2165.5,472.5 2167.5,480.5 2169.5,480.5 2171.5,476.5 2173.5,476.5 2175.5,472.5 2178.5,476.5 2180.5,480.5 2182.5,476.5 2184.5,472.5 2186.5,476.5 2189.5,472.5 2191.5,480.5 2193.5,480.5 2195.5,472.5 2197.5,472.5 2199.5,476.5 2202.5,476.5 2204.5,476.5 2206.5,476.5 2208.5,472.5 2210.5,476.5 2213.5,472.5" fill="none" stroke="#3aa6e0" stroke-width="1.5" stroke-linejoin="bevel" shape-rendering="crispEdges"/>
<polyline points="38.5,833.5 40.5,833.5 42.5,833.5 44.5,833.5 46.5,833.5 48.5,833.5 51.5,833.5 53.5,829.5 55.5,833.5 57.5,829.5 59.5,833.5 61.5,833.5 64.5,833.5 66.5,833.5 68.5,833.5 70.5,837.5 72.5,833.5 75.5,833.5 77.5,837.5 79.5,833.5 81.5,833.5 83.5,833.5 85.5,833.5 88.5,837.5 90.5,833.5 92.5,833.5 94.5,833.5 96.5,833.5 98.5,837.5 101.5,829.5 103.5,833.5 105.5,833.5 107.5,829.5 109.5,837.5 112.5,833.5 114.5,833.5 116.5,829.5 118.5,833.5 120.5,833.5 122.5,829.5 125.5,833.5 127.5,833.5 129.5,833.5 131.5,833.5 133.5,833.5 135.5,833.5 138.5,833.5 140.5,833.5 142.5,833.5 144.5,829.5 146.5,837.5 149.5,837.5 151.5,837.5 153.5,829.5 155.5,833.5 157.5,833.5 159.5,833.5 162.5,833.5 164.5,833.5 166.5,833.5 168.5,833.5 170.5,837.5 172.5,833.5 175.5,833.5 177.5,833.5 179.5,833.5 181.5,837.5 183.5,833.5 186.5,837.5 188.5,833.5 190.5,833.5 192.5,829.5 194.5,833.5 196.5,829.5 199.5,833.5 201.5,833.5 203.5,833.5 205.5,837.5 207.5,833.5 209.5,833.5 212.5,833.5 214.5,833.5 216.5,829.5 218.5,833.5 220.5,833.5 223.5,829.5 225.5,833.5 227.5,833.5 229.5,833.5 231.5,833.5 233.5,833.5 236.5,833.5 238.5,833.5 240.5,833.5 242.5,833.5 244.5,837.5 247.5,829.5 249.5,833.5 251.5,829.5 253.5,837.5 255.5,833.5 257.5,833.5 260.5,833.5 262.5,833.5 264.5,833.5 266.5,833.5 268.5,833.5 270.5,829.5 273.5,833.5 275.5,833.5 277.5,833.5 279.5,833.5 281.5,829.5 284.5,833.5 286.5,833.5 288.5,833.5 290.5,833.5 292.5,833.5 294.5,829.5 297.5,833.5 299.5,833.5 301.5,833.5 303.5,833.5 305.5,697.5 307.5,697.5 310.5,697.5 312.5,697.5 314.5,693.5 316.5,693.5 318.5,701.5 321.5,697.5 323.5,697.5 325.5,697.5 327.5,693.5 329.5,697.5 331.5,697.5 334.5,697.5 336.5,697.5 338.5,697.5 340.5,697.5 342.5,697.5 344.5,697.5 347.5,697.5 349.5,693.5 351.5,697.5 353.5,693.5 355.5,697.5 358.5,697.5 360.5,701.5 362.5,697.5 364.5,697.5 366.5,693.5 368.5,697.5 371.5,697.5 373.5,693.5 375.5,697.5 377.5,697.5 379.5,697.5 381.5,697.5 384.5,697.5 386.5,697.5 388.5,693.5 390.5,697.5 392.5,697.5 395.5,697.5 397.5,697.5 399.5,697.5 401.5,701.5 403.5,697.5 405.5,697.5 408.5,697.5 410.5,697.5 412.5,697.5 414.5,697.5 416.5,697.5 419.5,697.5 421.5,697.5 423.5,693.5 425.5,697.5 427.5,701.5 429.5,697.5 432.5,697.5 434.5,693.5 436.5,697.5 438.5,697.5 440.5,693.5 442.5,697.5 445.5,697.5 447.5,697.5 449.5,697.5 451.5,697.5 453.5,697.5 456.5,697.5 458.5,701.5 460.5,697.5 462.5,697.5 464.5,693.5 466.5,697.5 469.5,697.5 471.5,697.5 473.5,697.5 475.5,697.5 477.5,697.5 479.5,693.5 482.5,697.5 484.5,697.5 486.5,697.5 488.5,701.5 490.5,697.5 493.5,697.5 495.5,701.5 497.5,693.5 499.5,697.5 501.5,697.5 503.5,697.5 506.5,701.5 508.5,697.5 510.5,697.5 512.5,697.5 514.5,697.5 516.5,697.5 519.5,697.5 521.5,697.5 523.5,697.5 525.5,697.5 527.5,693.5 530.5,697.5 532.5,697.5 534.5,697.5 536.5,697.5 538.5,701.5 540.5,693.5 543.5,697.5 545.5,697.5 547.5,697.5 549.5,697.5 551.5,693.5 553.5,697.5 556.5,697.5 558.5,701.5 560.5,697.5 562.5,697.5 564.5,697.5 567.5,701.5 569.5,697.5 571.5,693.5 573.5,697.5 575.5,697.5 577.5,697.5 580.5,833.5 582.5,829.5 584.5,833.5 586.5,837.5 588.5,833.5 591.5,837.5 593.5,833.5 595.5,833.5 597.5,829.5 599.5,833.5 601.5,833.5 604.5,833.5 606.5,837.5 608.5,837.5 610.5,833.5 612.5,833.5 614.5,833.5 617.5,833.5 619.5,837.5 621.5,833.5 623.5,833.5 625.5,833.5 628.5,833.5 630.5,833.5 632.5,833.5 634.5,833.5 636.5,833.5 638.5,833.5 641.5,837.5 643.5,833.5 645.5,829.5 647.5,833.5 649.5,829.5 651.5,833.5 654.5,829.5 656.5,833.5 658.5,833.5 660.5,833.5 662.5,829.5 665.5,833.5 667.5,833.5 669.5,833.5 671.5,833.5 673.5,833.5 675.5,833.5 678.5,833.5 680.5,833.5 682.5,829.5 684.5,833.5 686.5,829.5 688.5,833.5 691.5,833.5 693.5,833.5 695.5,829.5 697.5,837.5 699.5,833.5 702.5,833.5 704.5,829.5 706.5,833.5 708.5,833.5 710.5,829.5 712.5,833.5 715.5,833.5 717.5,829.5 719.5,837.5 721.5,833.5 723.5,833.5 725.5,833.5 728.5,833.5 730.5,837.5 732.5,833.5 734.5,833.5 736.5,829.5 739.5,829.5 741.5,833.5 743.5,833.5 745.5,833.5 747.5,833.5 749.5,833.5 752.5,837.5 754.5,833.5 756.5,833.5 758.5,837.5 760.5,829.5 763.5,833.5 765.5,833.5 767.5,833.5 769.5,833.5 771.5,833.5 773.5,829.5 776.5,833.5 778.5,833.5 780.5,833.5 782.5,833.5 784.5,833.5 786.5,829.5 789.5,829.5 791.5,833.5 793.5,837.5 795.5,833.5 797.5,833.5 800.5,833.5 802.5,833.5 804.5,829.5 806.5,829.5 808.5,833.5 810.5,833.5 813.5,833.5 815.5,833.5 817.5,833.5 819.5,833.5 821.5,833.5 823.5,829.5 826.5,833.5 828.5,833.5 830.5,833.5 832.5,833.5 834.5,833.5 837.5,833.5 839.5,833.5 841.5,837.5 843.5,829.5 845.5,833.5 847.5,837.5 850.5,833.5 852.5,697.5 854.5,693.5 856.5,697.5 858.5,701.5 860.5,697.5 863.5,697.5 865.5,697.5 867.5,701.5 869.5,697.5 871.5,697.5 874.5,697.5 876.5,697.5 878.5,701.5 880.5,697.5 882.5,697.5 884.5,697.5 887.5,697.5 889.5,697.5 891.5,701.5 893.5,697.5 895.5,697.5 897.5,697.5 900.5,697.5 902.5,697.5 904.5,697.5 906.5,697.5 908.5,697.5 911.5,697.5 913.5,701.5 915.5,701.5 917.5,697.5 919.5,697.5 921.5,697.5 924.5,697.5 926.5,697.5 928.5,701.5 930.5,697.5 932.5,697.5 934.5,697.5 937.5,693.5 939.5,701.5 941.5,697.5 943.5,697.5 945.5,697.5 948.5,697.5 950.5,697.5 952.5,693.5 954.5,697.5 956.5,697.5 958.5,693.5 961.5,697.5 963.5,697.5 965.5,697.5 967.5,701.5 969.5,701.5 972.5,697.5 974.5,701.5 976.5,697.5 978.5,697.5 980.5,697.5 982.5,697.5 985.5,697.5 987.5,697.5 989.5,701.5 991.5,697.5 993.5,697.5 995.5,697.5 998.5,697.5 1000.5,697.5 1002.5,701.5 1004.5,697.5 1006.5,697.5 1009.5,697.5 1011.5,701.5 1013.5,697.5 1015.5,697.5 1017.5,697.5 1019.5,697.5 1022.5,701.5 1024.5,697.5 1026.5,697.5 1028.5,693.5 1030.5,701.5 1032.5,697.5 1035.5,697.5 1037.5,701.5 1039.5,697.5 1041.5,697.5 1043.5,701.5 1046.5,697.5 1048.5,697.5 1050.5,697.5 1052.5,697.5 1054.5,697.5 1056.5,697.5 1059.5,697.5 1061.5,697.5 1063.5,697.5 1065.5,693.5 1067.5,697.5 1069.5,693.5 1072.5,697.5 1074.5,697.5 1076.5,697.5 1078.5,697.5 1080.5,697.5 1083.5,697.5 1085.5,697.5 1087.5,697.5 1089.5,697.5 1091.5,693.5 1093.5,697.5 1096.5,697.5 1098.5,693.5 1100.5,693.5 1102.5,701.5 1104.5,697.5 1106.5,697.5 1109.5,697.5 1111.5,701.5 1113.5,697.5 1115.5,701.5 1117.5,697.5 1120.5,697.5 1122.5,697.5 1124.5,697.5 1126.5,833.5 1128.5,829.5 1130.5,829.5 1133.5,833.5 1135.5,829.5 1137.5,837.5 1139.5,833.5 1141.5,833.5 1144.5,833.5 1146.5,833.5 1148.5,837.5 1150.5,833.5 1152.5,833.5 1154.5,837.5 1157.5,833.5 1159.5,833.5 1161.5,833.5 1163.5,833.5 1165.5,833.5 1167.5,833.5 1170.5,829.5 1172.5,833.5 1174.5,833.5 1176.5,833.5 1178.5,833.5 1181.5,833.5 1183.5,833.5 1185.5,833.5 1187.5,837.5 1189.5,829.5 1191.5,833.5 1194.5,833.5 1196.5,829.5 1198.5,833.5 1200.5,833.5 1202.5,833.5 1204.5,833.5 1207.5,837.5 1209.5,833.5 1211.5,837.5 1213.5,833.5 1215.5,833.5 1218.5,833.5 1220.5,829.5 1222.5,833.5 1224.5,833.5 1226.5,833.5 1228.5,833.5 1231.5,833.5 1233.5,833.5 1235.5,833.5 1237.5,833.5 1239.5,833.5 1241.5,833.5 1244.5,829.5 1246.5,837.5 1248.5,829.5 1250.5,833.5 1252.5,833.5 1255.5,829.5 1257.5,833.5 1259.5,833.5 1261.5,833.5 1263.5,833.5 1265.5,833.5 1268.5,829.5 1270.5,833.5 1272.5,837.5 1274.5,833.5 1276.5,833.5 1278.5,833.5 1281.5,829.5 1283.5,833.5 1285.5,833.5 1287.5,833.5 1289.5,833.5 1292.5,833.5 1294.5,829.5 1296.5,833.5 1298.5,837.5 1300.5,833.5 1302.5,837.5 1305.5,833.5 1307.5,833.5 1309.5,833.5 1311.5,833.5 1313.5,833.5 1316.5,833.5 1318.5,833.5 1320.5,833.5 1322.5,833.5 1324.5,833.5 1326.5,833.5 1329.5,829.5 1331.5,829.5 1333.5,833.5 1335.5,829.5 1337.5,829.5 1339.5,833.5 1342.5,833.5 1344.5,833.5 1346.5,833.5 1348.5,833.5 1350.5,837.5 1353.5,833.5 1355.5,833.5 1357.5,833.5 1359.5,837.5 1361.5,833.5 1363.5,833.5 1366.5,837.5 1368.5,833.5 1370.5,837.5 1372.5,833.5 1374.5,833.5 1376.5,833.5 1379.5,833.5 1381.5,829.5 1383.5,833.5 1385.5,833.5 1387.5,829.5 1390.5,833.5 1392.5,833.5 1394.5,833.5 1396.5,833.5 1398.5,697.5 1400.5,697.5 1403.5,697.5 1405.5,697.5 1407.5,697.5 1409.5,697.5 1411.5,693.5 1413.5,697.5 1416.5,697.5 1418.5,697.5 1420.5,693.5 1422.5,697.5 1424.5,697.5 1427.5,697.5 1429.5,697.5 1431.5,697.5 1433.5,693.5 1435.5,697.5 1437.5,697.5 1440.5,701.5 1442.5,697.5 1444.5,697.5 1446.5,697.5 1448.5,697.5 1450.5,697.5 1453.5,697.5 1455.5,697.5 1457.5,693.5 1459.5,697.5 1461.5,697.5 1464.5,697.5 1466.5,701.5 1468.5,693.5 1470.5,697.5 1472.5,697.5 1474.5,697.5 1477.5,697.5 1479.5,697.5 1481.5,697.5 1483.5,697.5 1485.5,701.5 1488.5,693.5 1490.5,697.5 1492.5,693.5 1494.5,701.5 1496.5,697.5 1498.5,701.5 1501.5,701.5 1503.5,697.5 1505.5,697.5 1507.5,697.5 1509.5,697.5 1511.5,701.5 1514.5,697.5 1516.5,697.5 1518.5,693.5 1520.5,697.5 1522.5,697.5 1525.5,701.5 1527.5,697.5 1529.5,693.5 1531.5,701.5 1533.5,697.5 1535.5,697.5 1538.5,697.5 1540.5,697.5 1542.5,697.5 1544.5,697.5 1546.5,697.5 1548.5,693.5 1551.5,697.5 1553.5,693.5 1555.5,697.5 1557.5,697.5 1559.5,697.5 1562.5,697.5 1564.5,701.5 1566.5,701.5 1568.5,697.5 1570.5,697.5 1572.5,701.5 1575.5,697.5 1577.5,697.5 1579.5,697.5 1581.5,697.5 1583.5,697.5 1585.5,697.5 1588.5,697.5 1590.5,701.5 1592.5,693.5 1594.5,697.5 1596.5,697.5 1599.5,697.5 1601.5,697.5 1603.5,697.5 1605.5,697.5 1607.5,701.5 1609.5,697.5 1612.5,697.5 1614.5,697.5 1616.5,701.5 1618.5,697.5 1620.5,697.5 1622.5,697.5 1625.5,697.5 1627.5,701.5 1629.5,701.5 1631.5,697.5 1633.5,693.5 1636.5,701.5 1638.5,697.5 1640.5,693.5 1642.5,697.5 1644.5,701.5 1646.5,701.5 1649.5,701.5 1651.5,697.5 1653.5,697.5 1655.5,697.5 1657.5,697.5 1659.5,697.5 1662.5,697.5 1664.5,693.5 1666.5,697.5 1668.5,701.5 1670.5,701.5 1673.5,833.5 1675.5,833.5 1677.5,833.5 1679.5,833.5 1681.5,833.5 1683.5,837.5 1686.5,833.5 1688.5,833.5 1690.5,837.5 1692.5,829.5 1694.5,833.5 1697.5,833.5 1699.5,833.5 1701.5,833.5 1703.5,829.5 1705.5,833.5 1707.5,829.5 1710.5,833.5 1712.5,833.5 1714.5,833.5 1716.5,833.5 1718.5,833.5 1720.5,833.5 1723.5,833.5 1725.5,833.5 1727.5,829.5 1729.5,833.5 1731.5,837.5 1734.5,833.5 1736.5,829.5 1738.5,833.5 1740.5,833.5 1742.5,837.5 1744.5,833.5 1747.5,837.5 1749.5,833.5 1751.5,837.5 1753.5,833.5 1755.5,833.5 1757.5,833.5 1760.5,829.5 1762.5,837.5 1764.5,829.5 1766.5,833.5 1768.5,833.5 1771.5,837.5 1773.5,833.5 1775.5,829.5 1777.5,833.5 1779.5,833.5 1781.5,833.5 1784.5,833.5 1786.5,833.5 1788.5,833.5 1790.5,833.5 1792.5,833.5 1794.5,837.5 1797.5,833.5 1799.5,833.5 1801.5,833.5 1803.5,833.5 1805.5,833.5 1808.5,833.5 1810.5,833.5 1812.5,833.5 1814.5,833.5 1816.5,829.5 1818.5,837.5 1821.5,833.5 1823.5,833.5 1825.5,833.5 1827.5,833.5 1829.5,833.5 1831.5,833.5 1834.5,833.5 1836.5,837.5 1838.5,833.5 1840.5,833.5 1842.5,837.5 1845.5,837.5 1847.5,833.5 1849.5,829.5 1851.5,837.5 1853.5,833.5 1855.5,833.5 1858.5,833.5 1860.5,837.5 1862.5,833.5 1864.5,833.5 1866.5,837.5 1869.5,837.5 1871.5,829.5 1873.5,833.5 1875.5,837.5 1877.5,829.5 1879.5,833.5 1882.5,833.5 1884.5,833.5 1886.5,833.5 1888.5,833.5 1890.5,833.5 1892.5,837.5 1895.5,833.5 1897.5,833.5 1899.5,833.5 1901.5,837.5 1903.5,837.5 1906.5,833.5 1908.5,833.5 1910.5,833.5 1912.5,833.5 1914.5,833.5 1916.5,829.5 1919.5,833.5 1921.5,833.5 1923.5,833.5 1925.5,833.5 1927.5,833.5 1929.5,833.5 1932.5,833.5 1934.5,833.5 1936.5,833.5 1938.5,833.5 1940.5,837.5 1943.5,837.5 1945.5,697.5 1947.5,701.5 1949.5,697.5 1951.5,697.5 1953.5,697.5 1956.5,697.5 1958.5,697.5 1960.5,697.5 1962.5,701.5 1964.5,697.5 1966.5,697.5 1969.5,697.5 1971.5,701.5 1973.5,697.5 1975.5,701.5 1977.5,697.5 1980.5,697.5 1982.5,697.5 1984.5,697.5 1986.5,693.5 1988.5,697.5 1990.5,697.5 1993.5,697.5 1995.5,693.5 1997.5,697.5 1999.5,697.5 2001.5,697.5 2003.5,693.5 2006.5,701.5 2008.5,697.5 2010.5,701.5 2012.5,697.5 2014.5,697.5 2017.5,697.5 2019.5,697.5 2021.5,693.5 2023.5,697.5 2025.5,693.5 2027.5,697.5 2030.5,693.5 2032.5,697.5 2034.5,697.5 2036.5,697.5 2038.5,697.5 2041.5,701.5 2043.5,697.5 2045.5,697.5 2047.5,693.5 2049.5,697.5 2051.5,697.5 2054.5,697.5 2056.5,697.5 2058.5,701.5 2060.5,701.5 2062.5,697.5 2064.5,697.5 2067.5,697.5 2069.5,697.5 2071.5,697.5 2073.5,701.5 2075.5,697.5 2078.5,697.5 2080.5,697.5 2082.5,697.5 2084.5,697.5 2086.5,697.5 2088.5,693.5 2091.5,697.5 2093.5,697.5 2095.5,697.5 2097.5,697.5 2099.5,697.5 2101.5,701.5 2104.5,693.5 2106.5,693.5 2108.5,697.5 2110.5,697.5 2112.5,697.5 2115.5,697.5 2117.5,697.5 2119.5,697.5 2121.5,693.5 2123.5,697.5 2125.5,697.5 2128.5,697.5 2130.5,697.5 2132.5,697.5 2134.5,697.5 2136.5,697.5 2138.5,697.5 2141.5,697.5 2143.5,697.5 2145.5,701.5 2147.5,697.5 2149.5,697.5 2152.5,697.5 2154.5,697.5 2156.5,693.5 2158.5,697.5 2160.5,697.5 2162.5,701.5 2165.5,697.5 2167.5,697.5 2169.5,697.5 2171.5,697.5 2173.5,693.5 2175.5,697.5 2178.5,697.5 2180.5,697.5 2182.5,693.5 2184.5,697.5 2186.5,697.5 2189.5,697.5 2191.5,701.5 2193.5,697.5 2195.5,697.5 2197.5,701.5 2199.5,697.5 2202.5,697.5 2204.5,697.5 2206.5,697.5 2208.5,697.5 2210.5,697.5 2213.5,697.5" fill="none" stroke="#8c8c8c" stroke-width="1" stroke-linejoin="bevel" shape-rendering="crispEdges"/>
<polyline points="38.5,833.5 40.5,833.5 42.5,833.5 44.5,837.5 46.5,833.5 48.5,833.5 51.5,833.5 53.5,833.5 55.5,829.5 57.5,833.5 59.5,837.5 61.5,829.5 64.5,833.5 66.5,833.5 68.5,833.5 70.5,833.5 72.5,833.5 75.5,833.5 77.5,829.5 79.5,829.5 81.5,837.5 83.5,833.5 85.5,833.5 88.5,833.5 90.5,837.5 92.5,833.5 94.5,833.5 96.5,833.5 98.5,833.5 101.5,833.5 103.5,833.5 105.5,833.5 107.5,833.5 109.5,837.5 112.5,833.5 114.5,829.5 116.5,833.5 118.5,833.5 120.5,833.5 122.5,833.5 125.5,833.5 127.5,833.5 129.5,833.5 131.5,833.5 133.5,833.5 135.5,837.5 138.5,833.5 140.5,833.5 142.5,833.5 144.5,829.5 146.5,833.5 149.5,833.5 151.5,833.5 153.5,833.5 155.5,833.5 157.5,833.5 159.5,833.5 162.5,833.5 164.5,833.5 166.5,833.5 168.5,833.5 170.5,837.5 172.5,833.5 175.5,837.5 177.5,833.5 179.5,837.5 181.5,829.5 183.5,833.5 186.5,833.5 188.5,833.5 190.5,833.5 192.5,833.5 194.5,833.5 196.5,833.5 199.5,829.5 201.5,833.5 203.5,833.5 205.5,829.5 207.5,833.5 209.5,833.5 212.5,833.5 214.5,833.5 216.5,833.5 218.5,837.5 220.5,833.5 223.5,837.5 225.5,833.5 227.5,833.5 229.5,837.5 231.5,837.5 233.5,833.5 236.5,833.5 238.5,833.5 240.5,833.5 242.5,833.5 244.5,833.5 247.5,833.5 249.5,837.5 251.5,833.5 253.5,833.5 255.5,833.5 257.5,833.5 260.5,837.5 262.5,833.5 264.5,829.5 266.5,833.5 268.5,837.5 270.5,833.5 273.5,833.5 275.5,829.5 277.5,833.5 279.5,833.5 281.5,833.5 284.5,833.5 286.5,833.5 288.5,833.5 290.5,837.5 292.5,837.5 294.5,833.5 297.5,833.5 299.5,833.5 301.5,837.5 303.5,833.5 305.5,829.5 307.5,697.5 310.5,697.5 312.5,697.5 314.5,697.5 316.5,693.5 318.5,697.5 321.5,701.5 323.5,693.5 325.5,697.5 327.5,697.5 329.5,697.5 331.5,701.5 334.5,697.5 336.5,697.5 338.5,697.5 340.5,701.5 342.5,701.5 344.5,697.5 347.5,697.5 349.5,697.5 351.5,697.5 353.5,697.5 355.5,701.5 358.5,697.5 360.5,697.5 362.5,697.5 364.5,697.5 366.5,697.5 368.5,697.5 371.5,697.5 373.5,697.5 375.5,701.5 377.5,697.5 379.5,697.5 381.5,697.5 384.5,697.5 386.5,697.5 388.5,697.5 390.5,697.5 392.5,697.5 395.5,697.5 397.5,697.5 399.5,697.5 401.5,693.5 403.5,697.5 405.5,701.5 408.5,693.5 410.5,697.5 412.5,697.5 414.5,697.5 416.5,697.5 419.5,697.5 421.5,697.5 423.5,697.5 425.5,697.5 427.5,697.5 429.5,697.5 432.5,701.5 434.5,697.5 436.5,701.5 438.5,697.5 440.5,697.5 442.5,697.5 445.5,697.5 447.5,697.5 449.5,697.5 451.5,697.5 453.5,701.5 456.5,697.5 458.5,697.5 460.5,697.5 462.5,697.5 464.5,701.5 466.5,697.5 469.5,697.5 471.5,697.5 473.5,697.5 475.5,697.5 477.5,693.5 479.5,697.5 482.5,697.5 484.5,693.5 486.5,693.5 488.5,697.5 490.5,701.5 493.5,697.5 495.5,697.5 497.5,697.5 499.5,697.5 501.5,697.5 503.5,697.5 506.5,697.5 508.5,697.5 510.5,697.5 512.5,697.5 514.5,697.5 516.5,697.5 519.5,697.5 521.5,697.5 523.5,697.5 525.5,693.5 527.5,697.5 530.5,697.5 532.5,697.5 534.5,697.5 536.5,693.5 538.5,697.5 540.5,697.5 543.5,697.5 545.5,697.5 547.5,697.5 549.5,697.5 551.5,697.5 553.5,697.5 556.5,701.5 558.5,697.5 560.5,693.5 562.5,697.5 564.5,697.5 567.5,697.5 569.5,697.5 571.5,697.5 573.5,701.5 575.5,697.5 577.5,697.5 580.5,697.5 582.5,833.5 584.5,833.5 586.5,837.5 588.5,833.5 591.5,833.5 593.5,833.5 595.5,833.5 597.5,837.5 599.5,833.5 601.5,829.5 604.5,833.5 606.5,833.5 608.5,833.5 610.5,833.5 612.5,829.5 614.5,833.5 617.5,833.5 619.5,833.5 621.5,833.5 623.5,833.5 625.5,833.5 628.5,833.5 630.5,833.5 632.5,833.5 634.5,833.5 636.5,833.5 638.5,833.5 641.5,833.5 643.5,833.5 645.5,833.5 647.5,833.5 649.5,833.5 651.5,833.5 654.5,833.5 656.5,833.5 658.5,833.5 660.5,833.5 662.5,833.5 665.5,833.5 667.5,833.5 669.5,833.5 671.5,833.5 673.5,833.5 675.5,833.5 678.5,833.5 680.5,833.5 682.5,837.5 684.5,833.5 686.5,833.5 688.5,829.5 691.5,837.5 693.5,837.5 695.5,837.5 697.5,833.5 699.5,837.5 702.5,833.5 704.5,833.5 706.5,833.5 708.5,833.5 710.5,833.5 712.5,833.5 715.5,833.5 717.5,833.5 719.5,833.5 721.5,833.5 723.5,829.5 725.5,833.5 728.5,833.5 730.5,833.5 732.5,837.5 734.5,833.5 736.5,833.5 739.5,833.5 741.5,833.5 743.5,833.5 745.5,833.5 747.5,833.5 749.5,833.5 752.5,833.5 754.5,833.5 756.5,833.5 758.5,833.5 760.5,833.5 763.5,833.5 765.5,833.5 767.5,833.5 769.5,833.5 771.5,833.5 773.5,829.5 776.5,829.5 778.5,837.5 780.5,833.5 782.5,833.5 784.5,833.5 786.5,833.5 789.5,833.5 791.5,833.5 793.5,837.5 795.5,833.5 797.5,833.5 800.5,833.5 802.5,833.5 804.5,833.5 806.5,833.5 808.5,833.5 810.5,833.5 813.5,833.5 815.5,837.5 817.5,833.5 819.5,833.5 821.5,833.5 823.5,833.5 826.5,833.5 828.5,837.5 830.5,833.5 832.5,833.5 834.5,829.5 837.5,833.5 839.5,833.5 841.5,833.5 843.5,833.5 845.5,833.5 847.5,833.5 850.5,833.5 852.5,833.5 854.5,697.5 856.5,697.5 858.5,697.5 860.5,697.5 863.5,697.5 865.5,697.5 867.5,697.5 869.5,697.5 871.5,697.5 874.5,697.5 876.5,697.5 878.5,697.5 880.5,697.5 882.5,697.5 884.5,697.5 887.5,697.5 889.5,697.5 891.5,697.5 893.5,697.5 895.5,697.5 897.5,697.5 900.5,697.5 902.5,697.5 904.5,697.5 906.5,697.5 908.5,697.5 911.5,697.5 913.5,701.5 915.5,697.5 917.5,697.5 919.5,693.5 921.5,697.5 924.5,697.5 926.5,697.5 928.5,697.5 930.5,697.5 932.5,697.5 934.5,697.5 937.5,697.5 939.5,697.5 941.5,697.5 943.5,697.5 945.5,693.5 948.5,697.5 950.5,697.5 952.5,697.5 954.5,693.5 956.5,693.5 958.5,701.5 961.5,697.5 963.5,697.5 965.5,697.5 967.5,693.5 969.5,697.5 972.5,697.5 974.5,697.5 976.5,697.5 978.5,697.5 980.5,697.5 982.5,693.5 985.5,697.5 987.5,693.5 989.5,701.5 991.5,697.5 993.5,697.5 995.5,697.5 998.5,697.5 1000.5,697.5 1002.5,697.5 1004.5,697.5 1006.5,697.5 1009.5,697.5 1011.5,697.5 1013.5,701.5 1015.5,697.5 1017.5,697.5 1019.5,697.5 1022.5,693.5 1024.5,697.5 1026.5,697.5 1028.5,697.5 1030.5,697.5 1032.5,697.5 1035.5,697.5 1037.5,697.5 1039.5,697.5 1041.5,701.5 1043.5,697.5 1046.5,693.5 1048.5,697.5 1050.5,701.5 1052.5,693.5 1054.5,701.5 1056.5,693.5 1059.5,697.5 1061.5,697.5 1063.5,693.5 1065.5,701.5 1067.5,697.5 1069.5,697.5 1072.5,697.5 1074.5,697.5 1076.5,701.5 1078.5,697.5 1080.5,697.5 1083.5,697.5 1085.5,697.5 1087.5,697.5 1089.5,697.5 1091.5,697.5 1093.5,697.5 1096.5,697.5 1098.5,697.5 1100.5,697.5 1102.5,697.5 1104.5,697.5 1106.5,697.5 1109.5,693.5 1111.5,697.5 1113.5,697.5 1115.5,697.5 1117.5,697.5 1120.5,697.5 1122.5,697.5 1124.5,697.5 1126.5,697.5 1128.5,833.5 1130.5,833.5 1133.5,833.5 1135.5,837.5 1137.5,837.5 1139.5,833.5 1141.5,833.5 1144.5,833.5 1146.5,833.5 1148.5,833.5 1150.5,837.5 1152.5,833.5 1154.5,837.5 1157.5,829.5 1159.5,833.5 1161.5,837.5 1163.5,833.5 1165.5,833.5 1167.5,833.5 1170.5,837.5 1172.5,833.5 1174.5,833.5 1176.5,833.5 1178.5,833.5 1181.5,833.5 1183.5,833.5 1185.5,833.5 1187.5,833.5 1189.5,833.5 1191.5,833.5 1194.5,833.5 1196.5,833.5 1198.5,833.5 1200.5,833.5 1202.5,833.5 1204.5,833.5 1207.5,833.5 1209.5,833.5 1211.5,833.5 1213.5,833.5 1215.5,833.5 1218.5,833.5 1220.5,837.5 1222.5,833.5 1224.5,833.5 1226.5,833.5 1228.5,829.5 1231.5,833.5 1233.5,833.5 1235.5,833.5 1237.5,833.5 1239.5,837.5 1241.5,833.5 1244.5,833.5 1246.5,833.5 1248.5,829.5 1250.5,833.5 1252.5,833.5 1255.5,833.5 1257.5,833.5 1259.5,833.5 1261.5,833.5 1263.5,833.5 1265.5,833.5 1268.5,833.5 1270.5,833.5 1272.5,833.5 1274.5,833.5 1276.5,837.5 1278.5,833.5 1281.5,829.5 1283.5,833.5 1285.5,833.5 1287.5,833.5 1289.5,833.5 1292.5,829.5 1294.5,833.5 1296.5,833.5 1298.5,833.5 1300.5,829.5 1302.5,833.5 1305.5,833.5 1307.5,837.5 1309.5,833.5 1311.5,833.5 1313.5,833.5 1316.5,833.5 1318.5,837.5 1320.5,833.5 1322.5,833.5 1324.5,833.5 1326.5,833.5 1329.5,833.5 1331.5,833.5 1333.5,829.5 1335.5,833.5 1337.5,833.5 1339.5,833.5 1342.5,833.5 1344.5,833.5 1346.5,833.5 1348.5,833.5 1350.5,833.5 1353.5,829.5 1355.5,829.5 1357.5,829.5 1359.5,833.5 1361.5,833.5 1363.5,833.5 1366.5,833.5 1368.5,833.5 1370.5,829.5 1372.5,833.5 1374.5,833.5 1376.5,833.5 1379.5,833.5 1381.5,833.5 1383.5,833.5 1385.5,833.5 1387.5,829.5 1390.5,837.5 1392.5,833.5 1394.5,837.5 1396.5,833.5 1398.5,833.5 1400.5,697.5 1403.5,697.5 1405.5,697.5 1407.5,697.5 1409.5,697.5 1411.5,697.5 1413.5,697.5 1416.5,697.5 1418.5,697.5 1420.5,697.5 1422.5,697.5 1424.5,697.5 1427.5,697.5 1429.5,697.5 1431.5,697.5 1433.5,697.5 1435.5,697.5 1437.5,697.5 1440.5,697.5 1442.5,701.5 1444.5,701.5 1446.5,697.5 1448.5,697.5 1450.5,697.5 1453.5,697.5 1455.5,697.5 1457.5,697.5 1459.5,697.5 1461.5,697.5 1464.5,697.5 1466.5,697.5 1468.5,697.5 1470.5,693.5 1472.5,697.5 1474.5,697.5 1477.5,697.5 1479.5,697.5 1481.5,697.5 1483.5,697.5 1485.5,701.5 1488.5,697.5 1490.5,697.5 1492.5,697.5 1494.5,701.5 1496.5,697.5 1498.5,697.5 1501.5,697.5 1503.5,701.5 1505.5,697.5 1507.5,697.5 1509.5,697.5 1511.5,693.5 1514.5,701.5 1516.5,697.5 1518.5,697.5 1520.5,697.5 1522.5,697.5 1525.5,701.5 1527.5,697.5 1529.5,697.5 1531.5,697.5 1533.5,693.5 1535.5,697.5 1538.5,697.5 1540.5,693.5 1542.5,697.5 1544.5,697.5 1546.5,693.5 1548.5,697.5 1551.5,697.5 1553.5,697.5 1555.5,693.5 1557.5,697.5 1559.5,697.5 1562.5,697.5 1564.5,697.5 1566.5,697.5 1568.5,697.5 1570.5,697.5 1572.5,697.5 1575.5,697.5 1577.5,697.5 1579.5,697.5 1581.5,697.5 1583.5,697.5 1585.5,697.5 1588.5,697.5 1590.5,693.5 1592.5,693.5 1594.5,697.5 1596.5,697.5 1599.5,697.5 1601.5,697.5 1603.5,697.5 1605.5,697.5 1607.5,697.5 1609.5,697.5 1612.5,697.5 1614.5,697.5 1616.5,697.5 1618.5,697.5 1620.5,697.5 1622.5,693.5 1625.5,697.5 1627.5,697.5 1629.5,697.5 1631.5,697.5 1633.5,697.5 1636.5,697.5 1638.5,697.5 1640.5,697.5 1642.5,693.5 1644.5,697.5 1646.5,701.5 1649.5,697.5 1651.5,697.5 1653.5,697.5 1655.5,693.5 1657.5,693.5 1659.5,697.5 1662.5,697.5 1664.5,697.5 1666.5,693.5 1668.5,697.5 1670.5,697.5 1673.5,697.5 1675.5,833.5 1677.5,829.5 1679.5,833.5 1681.5,833.5 1683.5,833.5 1686.5,833.5 1688.5,833.5 1690.5,833.5 1692.5,833.5 1694.5,833.5 1697.5,829.5 1699.5,833.5 1701.5,833.5 1703.5,833.5 1705.5,833.5 1707.5,833.5 1710.5,833.5 1712.5,833.5 1714.5,833.5 1716.5,833.5 1718.5,833.5 1720.5,833.5 1723.5,833.5 1725.5,833.5 1727.5,833.5 1729.5,833.5 1731.5,837.5 1734.5,833.5 1736.5,833.5 1738.5,833.5 1740.5,837.5 1742.5,829.5 1744.5,837.5 1747.5,833.5 1749.5,833.5 1751.5,833.5 1753.5,833.5 1755.5,829.5 1757.5,833.5 1760.5,833.5 1762.5,833.5 1764.5,833.5 1766.5,833.5 1768.5,833.5 1771.5,833.5 1773.5,833.5 1775.5,833.5 1777.5,833.5 1779.5,833.5 1781.5,837.5 1784.5,833.5 1786.5,833.5 1788.5,833.5 1790.5,833.5 1792.5,833.5 1794.5,833.5 1797.5,833.5 1799.5,833.5 1801.5,833.5 1803.5,833.5 1805.5,833.5 1808.5,837.5 1810.5,833.5 1812.5,837.5 1814.5,833.5 1816.5,829.5 1818.5,833.5 1821.5,829.5 1823.5,833.5 1825.5,833.5 1827.5,829.5 1829.5,833.5 1831.5,837.5 1834.5,833.5 1836.5,829.5 1838.5,833.5 1840.5,837.5 1842.5,833.5 1845.5,833.5 1847.5,833.5 1849.5,833.5 1851.5,833.5 1853.5,837.5 1855.5,837.5 1858.5,837.5 1860.5,833.5 1862.5,829.5 1864.5,833.5 1866.5,837.5 1869.5,833.5 1871.5,833.5 1873.5,833.5 1875.5,833.5 1877.5,833.5 1879.5,833.5 1882.5,833.5 1884.5,837.5 1886.5,833.5 1888.5,837.5 1890.5,833.5 1892.5,833.5 1895.5,833.5 1897.5,833.5 1899.5,833.5 1901.5,833.5 1903.5,833.5 1906.5,829.5 1908.5,833.5 1910.5,833.5 1912.5,833.5 1914.5,837.5 1916.5,833.5 1919.5,833.5 1921.5,833.5 1923.5,833.5 1925.5,833.5 1927.5,833.5 1929.5,833.5 1932.5,829.5 1934.5,833.5 1936.5,833.5 1938.5,833.5 1940.5,833.5 1943.5,833.5 1945.5,833.5 1947.5,697.5 1949.5,697.5 1951.5,697.5 1953.5,693.5 1956.5,697.5 1958.5,697.5 1960.5,701.5 1962.5,697.5 1964.5,697.5 1966.5,697.5 1969.5,701.5 1971.5,697.5 1973.5,697.5 1975.5,697.5 1977.5,697.5 1980.5,697.5 1982.5,697.5 1984.5,693.5 1986.5,697.5 1988.5,697.5 1990.5,697.5 1993.5,697.5 1995.5,701.5 1997.5,697.5 1999.5,697.5 2001.5,697.5 2003.5,697.5 2006.5,697.5 2008.5,697.5 2010.5,697.5 2012.5,697.5 2014.5,701.5 2017.5,701.5 2019.5,697.5 2021.5,697.5 2023.5,697.5 2025.5,701.5 2027.5,693.5 2030.5,697.5 2032.5,697.5 2034.5,697.5 2036.5,697.5 2038.5,697.5 2041.5,697.5 2043.5,697.5 2045.5,697.5 2047.5,697.5 2049.5,697.5 2051.5,697.5 2054.5,697.5 2056.5,697.5 2058.5,697.5 2060.5,701.5 2062.5,697.5 2064.5,697.5 2067.5,697.5 2069.5,697.5 2071.5,697.5 2073.5,697.5 2075.5,697.5 2078.5,693.5 2080.5,697.5 2082.5,697.5 2084.5,697.5 2086.5,697.5 2088.5,697.5 2091.5,697.5 2093.5,697.5 2095.5,697.5 2097.5,697.5 2099.5,693.5 2101.5,697.5 2104.5,693.5 2106.5,701.5 2108.5,697.5 2110.5,697.5 2112.5,697.5 2115.5,697.5 2117.5,697.5 2119.5,697.5 2121.5,697.5 2123.5,697.5 2125.5,697.5 2128.5,697.5 2130.5,697.5 2132.5,697.5 2134.5,697.5 2136.5,693.5 2138.5,697.5 2141.5,697.5 2143.5,697.5 2145.5,701.5 2147.5,697.5 2149.5,697.5 2152.5,697.5 2154.5,697.5 2156.5,697.5 2158.5,697.5 2160.5,701.5 2162.5,697.5 2165.5,697.5 2167.5,701.5 2169.5,693.5 2171.5,693.5 2173.5,697.5 2175.5,697.5 2178.5,697.5 2180.5,697.5 2182.5,697.5 2184.5,697.5 2186.5,697.5 2189.5,701.5 2191.5,701.5 2193.5,697.5 2195.5,697.5 2197.5,693.5 2199.5,697.5 2202.5,697.5 2204.5,697.5 2206.5,693.5 2208.5,697.5 2210.5,697.5 2213.5,697.5" fill="none" stroke="#989898" stroke-width="1" stroke-linejoin="bevel" shape-rendering="crispEdges"/>
<polyline points="38.5,1052.5 40.5,1052.5 42.5,1052.5 44.5,1048.5 46.5,1052.5 48.5,1048.5 51.5,1052.5 53.5,1052.5 55.5,1048.5 57.5,1052.5 59.5,1048.5 61.5,1048.5 64.5,1048.5 66.5,1052.5 68.5,1052.5 70.5,1052.5 72.5,1048.5 75.5,1052.5 77.5,1048.5 79.5,1048.5 81.5,1052.5 83.5,1048.5 85.5,1052.5 88.5,1048.5 90.5,1048.5 92.5,1052.5 94.5,1048.5 96.5,1048.5 98.5,1052.5 101.5,1048.5 103.5,1052.5 105.5,1048.5 107.5,1048.5 109.5,1056.5 112.5,1052.5 114.5,1052.5 116.5,1048.5 118.5,1048.5 120.5,1052.5 122.5,1048.5 125.5,1048.5 127.5,1052.5 129.5,1052.5 131.5,1048.5 133.5,1052.5 135.5,1048.5 138.5,1052.5 140.5,1052.5 142.5,1052.5 144.5,1052.5 146.5,1052.5 149.5,1048.5 151.5,1052.5 153.5,1048.5 155.5,1052.5 157.5,1048.5 159.5,1048.5 162.5,1052.5 164.5,1052.5 166.5,1052.5 168.5,1052.5 170.5,1048.5 172.5,1048.5 175.5,1048.5 177.5,1052.5 179.5,1048.5 181.5,1052.5 183.5,1048.5 186.5,1048.5 188.5,1048.5 190.5,1048.5 192.5,1052.5 194.5,1048.5 196.5,1056.5 199.5,1052.5 201.5,1052.5 203.5,1048.5 205.5,1048.5 207.5,1052.5 209.5,1052.5 212.5,1056.5 214.5,1052.5 216.5,1052.5 218.5,1048.5 220.5,1052.5 223.5,1048.5 225.5,1052.5 227.5,1048.5 229.5,1052.5 231.5,1048.5 233.5,1048.5 236.5,1048.5 238.5,1052.5 240.5,1052.5 242.5,1052.5 244.5,1052.5 247.5,1048.5 249.5,1052.5 251.5,1052.5 253.5,1052.5 255.5,1052.5 257.5,1052.5 260.5,1052.5 262.5,1048.5 264.5,1052.5 266.5,1043.5 268.5,1052.5 270.5,1052.5 273.5,1056.5 275.5,1048.5 277.5,1048.5 279.5,1052.5 281.5,1052.5 284.5,1048.5 286.5,1048.5 288.5,1052.5 290.5,1048.5 292.5,1052.5 294.5,1048.5 297.5,1048.5 299.5,1052.5 301.5,1052.5 303.5,1052.5 305.5,917.5 307.5,913.5 310.5,913.5 312.5,913.5 314.5,917.5 316.5,917.5 318.5,913.5 321.5,913.5 323.5,913.5 325.5,913.5 327.5,917.5 329.5,917.5 331.5,917.5 334.5,913.5 336.5,913.5 338.5,917.5 340.5,917.5 342.5,917.5 344.5,917.5 347.5,917.5 349.5,917.5 351.5,917.5 353.5,917.5 355.5,913.5 358.5,913.5 360.5,917.5 362.5,913.5 364.5,913.5 366.5,913.5 368.5,917.5 371.5,913.5 373.5,917.5 375.5,913.5 377.5,917.5 379.5,917.5 381.5,917.5 384.5,913.5 386.5,917.5 388.5,913.5 390.5,917.5 392.5,917.5 395.5,913.5 397.5,917.5 399.5,917.5 401.5,913.5 403.5,917.5 405.5,917.5 408.5,913.5 410.5,913.5 412.5,917.5 414.5,917.5 416.5,917.5 419.5,917.5 421.5,913.5 423.5,917.5 425.5,917.5 427.5,913.5 429.5,917.5 432.5,917.5 434.5,917.5 436.5,913.5 438.5,913.5 440.5,913.5 442.5,917.5 445.5,913.5 447.5,917.5 449.5,917.5 451.5,917.5 453.5,913.5 456.5,926.5 458.5,913.5 460.5,917.5 462.5,913.5 464.5,917.5 466.5,917.5 469.5,917.5 471.5,913.5 473.5,917.5 475.5,917.5 477.5,917.5 479.5,913.5 482.5,917.5 484.5,913.5 486.5,917.5 488.5,913.5 490.5,917.5 493.5,913.5 495.5,921.5 497.5,913.5 499.5,913.5 501.5,913.5 503.5,913.5 506.5,921.5 508.5,917.5 510.5,913.5 512.5,913.5 514.5,917.5 516.5,917.5 519.5,913.5 521.5,917.5 523.5,917.5 525.5,913.5 527.5,917.5 530.5,917.5 532.5,913.5 534.5,917.5 536.5,917.5 538.5,913.5 540.5,913.5 543.5,917.5 545.5,913.5 547.5,913.5 549.5,917.5 551.5,917.5 553.5,913.5 556.5,917.5 558.5,917.5 560.5,913.5 562.5,917.5 564.5,917.5 567.5,913.5 569.5,926.5 571.5,917.5 573.5,913.5 575.5,917.5 577.5,913.5 580.5,1052.5 582.5,1056.5 584.5,1052.5 586.5,1048.5 588.5,1052.5 591.5,1048.5 593.5,1052.5 595.5,1052.5 597.5,1048.5 599.5,1052.5 601.5,1048.5 604.5,1052.5 606.5,1052.5 608.5,1048.5 610.5,1052.5 612.5,1052.5 614.5,1052.5 617.5,1048.5 619.5,1052.5 621.5,1048.5 623.5,1052.5 625.5,1052.5 628.5,1048.5 630.5,1052.5 632.5,1048.5 634.5,1048.5 636.5,1048.5 638.5,1052.5 641.5,1048.5 643.5,1048.5 645.5,1048.5 647.5,1056.5 649.5,1052.5 651.5,1048.5 654.5,1052.5 656.5,1056.5 658.5,1052.5 660.5,1048.5 662.5,1052.5 665.5,1048.5 667.5,1048.5 669.5,1048.5 671.5,1048.5 673.5,1048.5 675.5,1048.5 678.5,1052.5 680.5,1052.5 682.5,1052.5 684.5,1048.5 686.5,1052.5 688.5,1052.5 691.5,1048.5 693.5,1048.5 695.5,1052.5 697.5,1048.5 699.5,1052.5 702.5,1056.5 704.5,1048.5 706.5,1048.5 708.5,1052.5 710.5,1048.5 712.5,1052.5 715.5,1052.5 717.5,1052.5 719.5,1048.5 721.5,1052.5 723.5,1048.5 725.5,1048.5 728.5,1052.5 730.5,1052.5 732.5,1048.5 734.5,1052.5 736.5,1052.5 739.5,1052.5 741.5,1052.5 743.5,1048.5 745.5,1052.5 747.5,1052.5 749.5,1048.5 752.5,1052.5 754.5,1052.5 756.5,1052.5 758.5,1052.5 760.5,1052.5 763.5,1052.5 765.5,1052.5 767.5,1048.5 769.5,1052.5 771.5,1052.5 773.5,1052.5 776.5,1048.5 778.5,1052.5 780.5,1052.5 782.5,1052.5 784.5,1052.5 786.5,1052.5 789.5,1048.5 791.5,1052.5 793.5,1052.5 795.5,1048.5 797.5,1048.5 800.5,1048.5 802.5,1052.5 804.5,1048.5 806.5,1052.5 808.5,1052.5 810.5,1052.5 813.5,1052.5 815.5,1052.5 817.5,1052.5 819.5,1048.5 821.5,1052.5 823.5,1052.5 826.5,1052.5 828.5,1052.5 830.5,1052.5 832.5,1048.5 834.5,1056.5 837.5,1052.5 839.5,1052.5 841.5,1048.5 843.5,1048.5 845.5,1052.5 847.5,1048.5 850.5,1048.5 852.5,917.5 854.5,917.5 856.5,913.5 858.5,917.5 860.5,913.5 863.5,913.5 865.5,917.5 867.5,913.5 869.5,917.5 871.5,917.5 874.5,913.5 876.5,917.5 878.5,917.5 880.5,921.5 882.5,917.5 884.5,913.5 887.5,917.5 889.5,917.5 891.5,917.5 893.5,917.5 895.5,917.5 897.5,913.5 900.5,913.5 902.5,917.5 904.5,917.5 906.5,913.5 908.5,913.5 911.5,917.5 913.5,913.5 915.5,917.5 917.5,921.5 919.5,913.5 921.5,913.5 924.5,917.5 926.5,917.5 928.5,913.5 930.5,917.5 932.5,917.5 934.5,917.5 937.5,917.5 939.5,917.5 941.5,917.5 943.5,913.5 945.5,917.5 948.5,917.5 950.5,917.5 952.5,917.5 954.5,917.5 956.5,917.5 958.5,913.5 961.5,913.5 963.5,917.5 965.5,917.5 967.5,926.5 969.5,913.5 972.5,917.5 974.5,913.5 976.5,921.5 978.5,913.5 980.5,917.5 982.5,917.5 985.5,917.5 987.5,917.5 989.5,917.5 991.5,921.5 993.5,917.5 995.5,917.5 998.5,913.5 1000.5,913.5 1002.5,917.5 1004.5,917.5 1006.5,913.5 1009.5,917.5 1011.5,913.5 1013.5,917.5 1015.5,921.5 1017.5,917.5 1019.5,917.5 1022.5,917.5 1024.5,913.5 1026.5,917.5 1028.5,913.5 1030.5,913.5 1032.5,917.5 1035.5,917.5 1037.5,917.5 1039.5,917.5 1041.5,921.5 1043.5,913.5 1046.5,917.5 1048.5,917.5 1050.5,917.5 1052.5,917.5 1054.5,917.5 1056.5,913.5 1059.5,917.5 1061.5,917.5 1063.5,917.5 1065.5,917.5 1067.5,917.5 1069.5,913.5 1072.5,917.5 1074.5,917.5 1076.5,908.5 1078.5,917.5 1080.5,917.5 1083.5,917.5 1085.5,926.5 1087.5,917.5 1089.5,917.5 1091.5,917.5 1093.5,913.5 1096.5,913.5 1098.5,917.5 1100.5,913.5 1102.5,913.5 1104.5,913.5 1106.5,917.5 1109.5,913.5 1111.5,913.5 1113.5,913.5 1115.5,917.5 1117.5,917.5 1120.5,913.5 1122.5,921.5 1124.5,917.5 1126.5,1052.5 1128.5,1052.5 1130.5,1052.5 1133.5,1052.5 1135.5,1048.5 1137.5,1052.5 1139.5,1048.5 1141.5,1048.5 1144.5,1052.5 1146.5,1052.5 1148.5,1048.5 1150.5,1052.5 1152.5,1048.5 1154.5,1048.5 1157.5,1056.5 1159.5,1052.5 1161.5,1048.5 1163.5,1048.5 1165.5,1052.5 1167.5,1048.5 1170.5,1048.5 1172.5,1056.5 1174.5,1052.5 1176.5,1052.5 1178.5,1052.5 1181.5,1048.5 1183.5,1048.5 1185.5,1048.5 1187.5,1052.5 1189.5,1048.5 1191.5,1048.5 1194.5,1048.5 1196.5,1052.5 1198.5,1052.5 1200.5,1052.5 1202.5,1052.5 1204.5,1052.5 1207.5,1056.5 1209.5,1052.5 1211.5,1048.5 1213.5,1048.5 1215.5,1052.5 1218.5,1048.5 1220.5,1048.5 1222.5,1048.5 1224.5,1052.5 1226.5,1043.5 1228.5,1052.5 1231.5,1052.5 1233.5,1048.5 1235.5,1052.5 1237.5,1052.5 1239.5,1052.5 1241.5,1048.5 1244.5,1048.5 1246.5,1052.5 1248.5,1052.5 1250.5,1052.5 1252.5,1056.5 1255.5,1052.5 1257.5,1052.5 1259.5,1048.5 1261.5,1056.5 1263.5,1052.5 1265.5,1052.5 1268.5,1052.5 1270.5,1048.5 1272.5,1052.5 1274.5,1052.5 1276.5,1052.5 1278.5,1052.5 1281.5,1052.5 1283.5,1052.5 1285.5,1048.5 1287.5,1052.5 1289.5,1052.5 1292.5,1048.5 1294.5,1052.5 1296.5,1048.5 1298.5,1056.5 1300.5,1052.5 1302.5,1048.5 1305.5,1052.5 1307.5,1048.5 1309.5,1061.5 1311.5,1056.5 1313.5,1048.5 1316.5,1048.5 1318.5,1048.5 1320.5,1052.5 1322.5,1048.5 1324.5,1052.5 1326.5,1052.5 1329.5,1052.5 1331.5,1052.5 1333.5,1052.5 1335.5,1052.5 1337.5,1052.5 1339.5,1048.5 1342.5,1052.5 1344.5,1052.5 1346.5,1052.5 1348.5,1052.5 1350.5,1052.5 1353.5,1048.5 1355.5,1052.5 1357.5,1048.5 1359.5,1052.5 1361.5,1052.5 1363.5,1052.5 1366.5,1052.5 1368.5,1048.5 1370.5,1048.5 1372.5,1048.5 1374.5,1048.5 1376.5,1056.5 1379.5,1048.5 1381.5,1052.5 1383.5,1052.5 1385.5,1052.5 1387.5,1048.5 1390.5,1052.5 1392.5,1052.5 1394.5,1052.5 1396.5,1052.5 1398.5,917.5 1400.5,913.5 1403.5,917.5 1405.5,913.5 1407.5,917.5 1409.5,913.5 1411.5,917.5 1413.5,913.5 1416.5,913.5 1418.5,917.5 1420.5,917.5 1422.5,917.5 1424.5,913.5 1427.5,917.5 1429.5,917.5 1431.5,917.5 1433.5,913.5 1435.5,917.5 1437.5,917.5 1440.5,913.5 1442.5,917.5 1444.5,913.5 1446.5,917.5 1448.5,921.5 1450.5,917.5 1453.5,917.5 1455.5,917.5 1457.5,913.5 1459.5,917.5 1461.5,913.5 1464.5,913.5 1466.5,917.5 1468.5,913.5 1470.5,913.5 1472.5,917.5 1474.5,913.5 1477.5,921.5 1479.5,917.5 1481.5,917.5 1483.5,917.5 1485.5,917.5 1488.5,917.5 1490.5,913.5 1492.5,921.5 1494.5,917.5 1496.5,917.5 1498.5,917.5 1501.5,917.5 1503.5,913.5 1505.5,917.5 1507.5,917.5 1509.5,917.5 1511.5,917.5 1514.5,917.5 1516.5,917.5 1518.5,917.5 1520.5,921.5 1522.5,917.5 1525.5,917.5 1527.5,913.5 1529.5,917.5 1531.5,917.5 1533.5,917.5 1535.5,913.5 1538.5,913.5 1540.5,913.5 1542.5,917.5 1544.5,913.5 1546.5,917.5 1548.5,913.5 1551.5,913.5 1553.5,917.5 1555.5,917.5 1557.5,917.5 1559.5,917.5 1562.5,913.5 1564.5,913.5 1566.5,913.5 1568.5,917.5 1570.5,917.5 1572.5,913.5 1575.5,913.5 1577.5,913.5 1579.5,917.5 1581.5,917.5 1583.5,917.5 1585.5,913.5 1588.5,917.5 1590.5,913.5 1592.5,917.5 1594.5,913.5 1596.5,913.5 1599.5,917.5 1601.5,917.5 1603.5,913.5 1605.5,917.5 1607.5,913.5 1609.5,913.5 1612.5,921.5 1614.5,917.5 1616.5,917.5 1618.5,913.5 1620.5,917.5 1622.5,917.5 1625.5,917.5 1627.5,913.5 1629.5,913.5 1631.5,917.5 1633.5,917.5 1636.5,917.5 1638.5,913.5 1640.5,917.5 1642.5,913.5 1644.5,917.5 1646.5,917.5 1649.5,917.5 1651.5,913.5 1653.5,917.5 1655.5,913.5 1657.5,917.5 1659.5,917.5 1662.5,917.5 1664.5,913.5 1666.5,921.5 1668.5,917.5 1670.5,917.5 1673.5,1052.5 1675.5,1052.5 1677.5,1048.5 1679.5,1052.5 1681.5,1052.5 1683.5,1052.5 1686.5,1052.5 1688.5,1048.5 1690.5,1056.5 1692.5,1052.5 1694.5,1052.5 1697.5,1048.5 1699.5,1052.5 1701.5,1052.5 1703.5,1052.5 1705.5,1052.5 1707.5,1052.5 1710.5,1048.5 1712.5,1048.5 1714.5,1052.5 1716.5,1048.5 1718.5,1052.5 1720.5,1048.5 1723.5,1052.5 1725.5,1052.5 1727.5,1052.5 1729.5,1048.5 1731.5,1052.5 1734.5,1052.5 1736.5,1056.5 1738.5,1052.5 1740.5,1052.5 1742.5,1048.5 1744.5,1048.5 1747.5,1048.5 1749.5,1052.5 1751.5,1052.5 1753.5,1048.5 1755.5,1052.5 1757.5,1056.5 1760.5,1052.5 1762.5,1052.5 1764.5,1052.5 1766.5,1056.5 1768.5,1048.5 1771.5,1052.5 1773.5,1048.5 1775.5,1048.5 1777.5,1052.5 1779.5,1048.5 1781.5,1052.5 1784.5,1048.5 1786.5,1048.5 1788.5,1052.5 1790.5,1052.5 1792.5,1052.5 1794.5,1052.5 1797.5,1052.5 1799.5,1048.5 1801.5,1048.5 1803.5,1052.5 1805.5,1052.5 1808.5,1052.5 1810.5,1052.5 1812.5,1052.5 1814.5,1052.5 1816.5,1052.5 1818.5,1052.5 1821.5,1052.5 1823.5,1056.5 1825.5,1052.5 1827.5,1052.5 1829.5,1052.5 1831.5,1052.5 1834.5,1052.5 1836.5,1048.5 1838.5,1052.5 1840.5,1048.5 1842.5,1052.5 1845.5,1048.5 1847.5,1052.5 1849.5,1056.5 1851.5,1056.5 1853.5,1048.5 1855.5,1052.5 1858.5,1052.5 1860.5,1052.5 1862.5,1052.5 1864.5,1048.5 1866.5,1052.5 1869.5,1052.5 1871.5,1056.5 1873.5,1048.5 1875.5,1048.5 1877.5,1048.5 1879.5,1052.5 1882.5,1052.5 1884.5,1048.5 1886.5,1052.5 1888.5,1048.5 1890.5,1052.5 1892.5,1052.5 1895.5,1052.5 1897.5,1052.5 1899.5,1048.5 1901.5,1048.5 1903.5,1052.5 1906.5,1052.5 1908.5,1052.5 1910.5,1052.5 1912.5,1052.5 1914.5,1052.5 1916.5,1048.5 1919.5,1052.5 1921.5,1052.5 1923.5,1052.5 1925.5,1052.5 1927.5,1048.5 1929.5,1048.5 1932.5,1052.5 1934.5,1052.5 1936.5,1052.5 1938.5,1048.5 1940.5,1052.5 1943.5,1052.5 1945.5,917.5 1947.5,913.5 1949.5,917.5 1951.5,917.5 1953.5,917.5 1956.5,913.5 1958.5,913.5 1960.5,913.5 1962.5,913.5 1964.5,917.5 1966.5,913.5 1969.5,917.5 1971.5,917.5 1973.5,917.5 1975.5,917.5 1977.5,917.5 1980.5,917.5 1982.5,917.5 1984.5,921.5 1986.5,917.5 1988.5,921.5 1990.5,921.5 1993.5,913.5 1995.5,917.5 1997.5,913.5 1999.5,917.5 2001.5,917.5 2003.5,913.5 2006.5,913.5 2008.5,917.5 2010.5,913.5 2012.5,917.5 2014.5,917.5 2017.5,917.5 2019.5,917.5 2021.5,917.5 2023.5,913.5 2025.5,921.5 2027.5,913.5 2030.5,913.5 2032.5,917.5 2034.5,917.5 2036.5,917.5 2038.5,917.5 2041.5,917.5 2043.5,913.5 2045.5,917.5 2047.5,917.5 2049.5,917.5 2051.5,913.5 2054.5,917.5 2056.5,913.5 2058.5,917.5 2060.5,917.5 2062.5,917.5 2064.5,921.5 2067.5,926.5 2069.5,917.5 2071.5,913.5 2073.5,917.5 2075.5,917.5 2078.5,913.5 2080.5,908.5 2082.5,917.5 2084.5,917.5 2086.5,917.5 2088.5,913.5 2091.5,917.5 2093.5,917.5 2095.5,913.5 2097.5,917.5 2099.5,917.5 2101.5,913.5 2104.5,917.5 2106.5,921.5 2108.5,917.5 2110.5,913.5 2112.5,917.5 2115.5,917.5 2117.5,917.5 2119.5,913.5 2121.5,917.5 2123.5,917.5 2125.5,917.5 2128.5,917.5 2130.5,917.5 2132.5,917.5 2134.5,917.5 2136.5,917.5 2138.5,917.5 2141.5,913.5 2143.5,917.5 2145.5,917.5 2147.5,913.5 2149.5,913.5 2152.5,913.5 2154.5,917.5 2156.5,913.5 2158.5,917.5 2160.5,917.5 2162.5,917.5 2165.5,913.5 2167.5,913.5 2169.5,917.5 2171.5,917.5 2173.5,917.5 2175.5,917.5 2178.5,917.5 2180.5,917.5 2182.5,913.5 2184.5,913.5 2186.5,913.5 2189.5,917.5 2191.5,913.5 2193.5,917.5 2195.5,917.5 2197.5,917.5 2199.5,913.5 2202.5,917.5 2204.5,917.5 2206.5,917.5 2208.5,917.5 2210.5,913.5 2213.5,913.5" fill="none" stroke="#8c8c8c" stroke-width="1" stroke-linejoin="bevel" shape-rendering="crispEdges"/>
<polyline points="38.5,1052.5 40.5,1052.5 42.5,1052.5 44.5,1052.5 46.5,1048.5 48.5,1048.5 51.5,1048.5 53.5,1052.5 55.5,1052.5 57.5,1052.5 59.5,1052.5 61.5,1052.5 64.5,1052.5 66.5,1052.5 68.5,1052.5 70.5,1052.5 72.5,1052.5 75.5,1052.5 77.5,1048.5 79.5,1052.5 81.5,1048.5 83.5,1048.5 85.5,1052.5 88.5,1052.5 90.5,1056.5 92.5,1052.5 94.5,1052.5 96.5,1052.5 98.5,1048.5 101.5,1052.5 103.5,1048.5 105.5,1048.5 107.5,1052.5 109.5,1056.5 112.5,1052.5 114.5,1052.5 116.5,1048.5 118.5,1052.5 120.5,1048.5 122.5,1052.5 125.5,1048.5 127.5,1052.5 129.5,1052.5 131.5,1052.5 133.5,1052.5 135.5,1052.5 138.5,1052.5 140.5,1052.5 142.5,1052.5 144.5,1052.5 146.5,1052.5 149.5,1052.5 151.5,1052.5 153.5,1048.5 155.5,1052.5 157.5,1052.5 159.5,1052.5 162.5,1048.5 164.5,1052.5 166.5,1052.5 168.5,1056.5 170.5,1052.5 172.5,1052.5 175.5,1048.5 177.5,1048.5 179.5,1048.5 181.5,1052.5 183.5,1052.5 186.5,1052.5 188.5,1052.5 190.5,1052.5 192.5,1048.5 194.5,1048.5 196.5,1052.5 199.5,1052.5 201.5,1052.5 203.5,1048.5 205.5,1052.5 207.5,1052.5 209.5,1052.5 212.5,1052.5 214.5,1052.5 216.5,1052.5 218.5,1048.5 220.5,1052.5 223.5,1052.5 225.5,1061.5 227.5,1052.5 229.5,1052.5 231.5,1052.5 233.5,1052.5 236.5,1048.5 238.5,1052.5 240.5,1052.5 242.5,1052.5 244.5,1061.5 247.5,1056.5 249.5,1048.5 251.5,1052.5 253.5,1048.5 255.5,1048.5 257.5,1052.5 260.5,1052.5 262.5,1052.5 264.5,1052.5 266.5,1052.5 268.5,1052.5 270.5,1056.5 273.5,1048.5 275.5,1052.5 277.5,1052.5 279.5,1052.5 281.5,1048.5 284.5,1048.5 286.5,1052.5 288.5,1052.5 290.5,1052.5 292.5,1052.5 294.5,1048.5 297.5,1052.5 299.5,1048.5 301.5,1052.5 303.5,1052.5 305.5,1052.5 307.5,917.5 310.5,913.5 312.5,913.5 314.5,913.5 316.5,917.5 318.5,917.5 321.5,913.5 323.5,913.5 325.5,917.5 327.5,917.5 329.5,917.5 331.5,913.5 334.5,913.5 336.5,917.5 338.5,917.5 340.5,917.5 342.5,917.5 344.5,913.5 347.5,917.5 349.5,917.5 351.5,917.5 353.5,913.5 355.5,917.5 358.5,917.5 360.5,926.5 362.5,917.5 364.5,917.5 366.5,917.5 368.5,917.5 371.5,917.5 373.5,917.5 375.5,917.5 377.5,917.5 379.5,917.5 381.5,917.5 384.5,917.5 386.5,913.5 388.5,913.5 390.5,917.5 392.5,917.5 395.5,913.5 397.5,917.5 399.5,917.5 401.5,913.5 403.5,917.5 405.5,917.5 408.5,913.5 410.5,913.5 412.5,917.5 414.5,917.5 416.5,917.5 419.5,917.5 421.5,917.5 423.5,913.5 425.5,913.5 427.5,921.5 429.5,917.5 432.5,917.5 434.5,917.5 436.5,913.5 438.5,917.5 440.5,917.5 442.5,917.5 445.5,917.5 447.5,917.5 449.5,917.5 451.5,913.5 453.5,917.5 456.5,913.5 458.5,917.5 460.5,917.5 462.5,908.5 464.5,921.5 466.5,913.5 469.5,913.5 471.5,917.5 473.5,917.5 475.5,917.5 477.5,917.5 479.5,917.5 482.5,917.5 484.5,921.5 486.5,917.5 488.5,913.5 490.5,917.5 493.5,917.5 495.5,921.5 497.5,926.5 499.5,917.5 501.5,917.5 503.5,921.5 506.5,917.5 508.5,917.5 510.5,913.5 512.5,917.5 514.5,917.5 516.5,917.5 519.5,913.5 521.5,917.5 523.5,921.5 525.5,917.5 527.5,917.5 530.5,917.5 532.5,913.5 534.5,917.5 536.5,917.5 538.5,913.5 540.5,917.5 543.5,917.5 545.5,917.5 547.5,917.5 549.5,917.5 551.5,917.5 553.5,913.5 556.5,917.5 558.5,913.5 560.5,917.5 562.5,917.5 564.5,913.5 567.5,917.5 569.5,917.5 571.5,913.5 573.5,917.5 575.5,917.5 577.5,908.5 580.5,917.5 582.5,1052.5 584.5,1052.5 586.5,1048.5 588.5,1048.5 591.5,1048.5 593.5,1052.5 595.5,1052.5 597.5,1048.5 599.5,1048.5 601.5,1052.5 604.5,1056.5 606.5,1052.5 608.5,1052.5 610.5,1048.5 612.5,1052.5 614.5,1048.5 617.5,1048.5 619.5,1052.5 621.5,1052.5 623.5,1052.5 625.5,1052.5 628.5,1052.5 630.5,1052.5 632.5,1048.5 634.5,1052.5 636.5,1052.5 638.5,1052.5 641.5,1052.5 643.5,1048.5 645.5,1048.5 647.5,1052.5 649.5,1052.5 651.5,1052.5 654.5,1052.5 656.5,1048.5 658.5,1052.5 660.5,1052.5 662.5,1048.5 665.5,1052.5 667.5,1052.5 669.5,1052.5 671.5,1052.5 673.5,1048.5 675.5,1048.5 678.5,1052.5 680.5,1048.5 682.5,1052.5 684.5,1052.5 686.5,1052.5 688.5,1052.5 691.5,1048.5 693.5,1048.5 695.5,1048.5 697.5,1048.5 699.5,1052.5 702.5,1052.5 704.5,1052.5 706.5,1048.5 708.5,1048.5 710.5,1052.5 712.5,1052.5 715.5,1052.5 717.5,1048.5 719.5,1048.5 721.5,1056.5 723.5,1048.5 725.5,1048.5 728.5,1052.5 730.5,1048.5 732.5,1052.5 734.5,1048.5 736.5,1048.5 739.5,1048.5 741.5,1048.5 743.5,1052.5 745.5,1048.5 747.5,1052.5 749.5,1048.5 752.5,1048.5 754.5,1052.5 756.5,1048.5 758.5,1052.5 760.5,1052.5 763.5,1048.5 765.5,1052.5 767.5,1052.5 769.5,1052.5 771.5,1052.5 773.5,1048.5 776.5,1056.5 778.5,1052.5 780.5,1052.5 782.5,1052.5 784.5,1056.5 786.5,1052.5 789.5,1048.5 791.5,1052.5 793.5,1056.5 795.5,1052.5 797.5,1056.5 800.5,1052.5 802.5,1052.5 804.5,1052.5 806.5,1048.5 808.5,1052.5 810.5,1052.5 813.5,1052.5 815.5,1052.5 817.5,1052.5 819.5,1052.5 821.5,1048.5 823.5,1052.5 826.5,1048.5 828.5,1052.5 830.5,1048.5 832.5,1048.5 834.5,1048.5 837.5,1052.5 839.5,1052.5 841.5,1048.5 843.5,1052.5 845.5,1052.5 847.5,1048.5 850.5,1048.5 852.5,1052.5 854.5,917.5 856.5,917.5 858.5,917.5 860.5,917.5 863.5,917.5 865.5,917.5 867.5,913.5 869.5,913.5 871.5,913.5 874.5,917.5 876.5,917.5 878.5,917.5 880.5,917.5 882.5,917.5 884.5,917.5 887.5,917.5 889.5,917.5 891.5,917.5 893.5,917.5 895.5,917.5 897.5,917.5 900.5,913.5 902.5,913.5 904.5,917.5 906.5,917.5 908.5,917.5 911.5,917.5 913.5,917.5 915.5,913.5 917.5,913.5 919.5,913.5 921.5,917.5 924.5,917.5 926.5,917.5 928.5,917.5 930.5,917.5 932.5,913.5 934.5,917.5 937.5,917.5 939.5,917.5 941.5,917.5 943.5,913.5 945.5,917.5 948.5,917.5 950.5,917.5 952.5,917.5 954.5,913.5 956.5,913.5 958.5,917.5 961.5,917.5 963.5,917.5 965.5,921.5 967.5,917.5 969.5,917.5 972.5,917.5 974.5,913.5 976.5,917.5 978.5,913.5 980.5,913.5 982.5,921.5 985.5,917.5 987.5,913.5 989.5,913.5 991.5,917.5 993.5,913.5 995.5,917.5 998.5,913.5 1000.5,917.5 1002.5,913.5 1004.5,913.5 1006.5,917.5 1009.5,917.5 1011.5,917.5 1013.5,917.5 1015.5,913.5 1017.5,917.5 1019.5,917.5 1022.5,917.5 1024.5,917.5 1026.5,917.5 1028.5,917.5 1030.5,917.5 1032.5,917.5 1035.5,917.5 1037.5,917.5 1039.5,913.5 1041.5,913.5 1043.5,917.5 1046.5,917.5 1048.5,917.5 1050.5,917.5 1052.5,917.5 1054.5,917.5 1056.5,913.5 1059.5,917.5 1061.5,913.5 1063.5,913.5 1065.5,913.5 1067.5,917.5 1069.5,917.5 1072.5,917.5 1074.5,913.5 1076.5,913.5 1078.5,921.5 1080.5,917.5 1083.5,913.5 1085.5,917.5 1087.5,917.5 1089.5,917.5 1091.5,917.5 1093.5,917.5 1096.5,917.5 1098.5,917.5 1100.5,913.5 1102.5,917.5 1104.5,917.5 1106.5,917.5 1109.5,917.5 1111.5,917.5 1113.5,917.5 1115.5,917.5 1117.5,917.5 1120.5,917.5 1122.5,917.5 1124.5,917.5 1126.5,917.5 1128.5,1052.5 1130.5,1052.5 1133.5,1052.5 1135.5,1052.5 1137.5,1048.5 1139.5,1052.5 1141.5,1048.5 1144.5,1048.5 1146.5,1052.5 1148.5,1052.5 1150.5,1052.5 1152.5,1052.5 1154.5,1061.5 1157.5,1052.5 1159.5,1052.5 1161.5,1056.5 1163.5,1052.5 1165.5,1052.5 1167.5,1052.5 1170.5,1048.5 1172.5,1052.5 1174.5,1052.5 1176.5,1052.5 1178.5,1052.5 1181.5,1048.5 1183.5,1052.5 1185.5,1052.5 1187.5,1052.5 1189.5,1052.5 1191.5,1056.5 1194.5,1048.5 1196.5,1048.5 1198.5,1052.5 1200.5,1052.5 1202.5,1052.5 1204.5,1048.5 1207.5,1052.5 1209.5,1048.5 1211.5,1052.5 1213.5,1048.5 1215.5,1052.5 1218.5,1052.5 1220.5,1048.5 1222.5,1052.5 1224.5,1048.5 1226.5,1052.5 1228.5,1048.5 1231.5,1048.5 1233.5,1048.5 1235.5,1052.5 1237.5,1052.5 1239.5,1052.5 1241.5,1048.5 1244.5,1052.5 1246.5,1052.5 1248.5,1052.5 1250.5,1052.5 1252.5,1052.5 1255.5,1052.5 1257.5,1052.5 1259.5,1048.5 1261.5,1052.5 1263.5,1052.5 1265.5,1052.5 1268.5,1052.5 1270.5,1052.5 1272.5,1052.5 1274.5,1048.5 1276.5,1048.5 1278.5,1052.5 1281.5,1048.5 1283.5,1052.5 1285.5,1052.5 1287.5,1052.5 1289.5,1048.5 1292.5,1052.5 1294.5,1052.5 1296.5,1048.5 1298.5,1052.5 1300.5,1048.5 1302.5,1052.5 1305.5,1052.5 1307.5,1052.5 1309.5,1052.5 1311.5,1052.5 1313.5,1052.5 1316.5,1052.5 1318.5,1052.5 1320.5,1048.5 1322.5,1052.5 1324.5,1052.5 1326.5,1052.5 1329.5,1052.5 1331.5,1052.5 1333.5,1052.5 1335.5,1052.5 1337.5,1052.5 1339.5,1048.5 1342.5,1052.5 1344.5,1052.5 1346.5,1052.5 1348.5,1052.5 1350.5,1052.5 1353.5,1048.5 1355.5,1052.5 1357.5,1052.5 1359.5,1052.5 1361.5,1061.5 1363.5,1052.5 1366.5,1052.5 1368.5,1052.5 1370.5,1052.5 1372.5,1048.5 1374.5,1052.5 1376.5,1048.5 1379.5,1056.5 1381.5,1048.5 1383.5,1052.5 1385.5,1048.5 1387.5,1052.5 1390.5,1052.5 1392.5,1048.5 1394.5,1052.5 1396.5,1056.5 1398.5,1048.5 1400.5,917.5 1403.5,917.5 1405.5,917.5 1407.5,913.5 1409.5,917.5 1411.5,917.5 1413.5,917.5 1416.5,917.5 1418.5,913.5 1420.5,917.5 1422.5,913.5 1424.5,917.5 1427.5,917.5 1429.5,917.5 1431.5,917.5 1433.5,917.5 1435.5,921.5 1437.5,917.5 1440.5,913.5 1442.5,917.5 1444.5,917.5 1446.5,917.5 1448.5,917.5 1450.5,913.5 1453.5,917.5 1455.5,913.5 1457.5,913.5 1459.5,917.5 1461.5,917.5 1464.5,917.5 1466.5,917.5 1468.5,917.5 1470.5,917.5 1472.5,913.5 1474.5,917.5 1477.5,913.5 1479.5,917.5 1481.5,917.5 1483.5,917.5 1485.5,917.5 1488.5,917.5 1490.5,921.5 1492.5,917.5 1494.5,913.5 1496.5,917.5 1498.5,917.5 1501.5,917.5 1503.5,917.5 1505.5,917.5 1507.5,917.5 1509.5,917.5 1511.5,913.5 1514.5,917.5 1516.5,917.5 1518.5,917.5 1520.5,917.5 1522.5,913.5 1525.5,917.5 1527.5,917.5 1529.5,917.5 1531.5,913.5 1533.5,917.5 1535.5,913.5 1538.5,917.5 1540.5,917.5 1542.5,917.5 1544.5,917.5 1546.5,917.5 1548.5,917.5 1551.5,917.5 1553.5,913.5 1555.5,917.5 1557.5,913.5 1559.5,913.5 1562.5,917.5 1564.5,917.5 1566.5,917.5 1568.5,917.5 1570.5,917.5 1572.5,917.5 1575.5,917.5 1577.5,917.5 1579.5,913.5 1581.5,913.5 1583.5,917.5 1585.5,917.5 1588.5,917.5 1590.5,913.5 1592.5,913.5 1594.5,917.5 1596.5,917.5 1599.5,913.5 1601.5,913.5 1603.5,917.5 1605.5,913.5 1607.5,917.5 1609.5,917.5 1612.5,917.5 1614.5,917.5 1616.5,926.5 1618.5,917.5 1620.5,917.5 1622.5,917.5 1625.5,917.5 1627.5,917.5 1629.5,913.5 1631.5,913.5 1633.5,917.5 1636.5,913.5 1638.5,917.5 1640.5,913.5 1642.5,913.5 1644.5,917.5 1646.5,917.5 1649.5,917.5 1651.5,917.5 1653.5,921.5 1655.5,917.5 1657.5,917.5 1659.5,921.5 1662.5,917.5 1664.5,917.5 1666.5,917.5 1668.5,917.5 1670.5,917.5 1673.5,913.5 1675.5,1052.5 1677.5,1048.5 1679.5,1052.5 1681.5,1052.5 1683.5,1048.5 1686.5,1052.5 1688.5,1048.5 1690.5,1052.5 1692.5,1056.5 1694.5,1052.5 1697.5,1052.5 1699.5,1052.5 1701.5,1052.5 1703.5,1052.5 1705.5,1052.5 1707.5,1043.5 1710.5,1052.5 1712.5,1052.5 1714.5,1048.5 1716.5,1052.5 1718.5,1048.5 1720.5,1052.5 1723.5,1052.5 1725.5,1048.5 1727.5,1056.5 1729.5,1052.5 1731.5,1052.5 1734.5,1052.5 1736.5,1048.5 1738.5,1052.5 1740.5,1048.5 1742.5,1048.5 1744.5,1052.5 1747.5,1048.5 1749.5,1052.5 1751.5,1048.5 1753.5,1052.5 1755.5,1048.5 1757.5,1052.5 1760.5,1052.5 1762.5,1052.5 1764.5,1061.5 1766.5,1048.5 1768.5,1052.5 1771.5,1052.5 1773.5,1052.5 1775.5,1048.5 1777.5,1052.5 1779.5,1048.5 1781.5,1048.5 1784.5,1056.5 1786.5,1052.5 1788.5,1052.5 1790.5,1048.5 1792.5,1052.5 1794.5,1052.5 1797.5,1052.5 1799.5,1048.5 1801.5,1052.5 1803.5,1056.5 1805.5,1048.5 1808.5,1052.5 1810.5,1052.5 1812.5,1056.5 1814.5,1052.5 1816.5,1056.5 1818.5,1052.5 1821.5,1052.5 1823.5,1048.5 1825.5,1052.5 1827.5,1048.5 1829.5,1052.5 1831.5,1052.5 1834.5,1048.5 1836.5,1056.5 1838.5,1052.5 1840.5,1048.5 1842.5,1052.5 1845.5,1052.5 1847.5,1052.5 1849.5,1052.5 1851.5,1052.5 1853.5,1048.5 1855.5,1052.5 1858.5,1056.5 1860.5,1052.5 1862.5,1048.5 1864.5,1052.5 1866.5,1052.5 1869.5,1052.5 1871.5,1052.5 1873.5,1048.5 1875.5,1052.5 1877.5,1052.5 1879.5,1052.5 1882.5,1056.5 1884.5,1048.5 1886.5,1048.5 1888.5,1052.5 1890.5,1052.5 1892.5,1052.5 1895.5,1052.5 1897.5,1052.5 1899.5,1052.5 1901.5,1052.5 1903.5,1052.5 1906.5,1052.5 1908.5,1052.5 1910.5,1048.5 1912.5,1052.5 1914.5,1052.5 1916.5,1052.5 1919.5,1052.5 1921.5,1048.5 1923.5,1052.5 1925.5,1052.5 1927.5,1052.5 1929.5,1052.5 1932.5,1052.5 1934.5,1048.5 1936.5,1048.5 1938.5,1052.5 1940.5,1052.5 1943.5,1052.5 1945.5,1052.5 1947.5,913.5 1949.5,921.5 1951.5,917.5 1953.5,921.5 1956.5,913.5 1958.5,917.5 1960.5,917.5 1962.5,926.5 1964.5,917.5 1966.5,917.5 1969.5,917.5 1971.5,917.5 1973.5,913.5 1975.5,917.5 1977.5,913.5 1980.5,917.5 1982.5,917.5 1984.5,913.5 1986.5,913.5 1988.5,921.5 1990.5,913.5 1993.5,913.5 1995.5,913.5 1997.5,913.5 1999.5,913.5 2001.5,917.5 2003.5,913.5 2006.5,917.5 2008.5,917.5 2010.5,917.5 2012.5,913.5 2014.5,913.5 2017.5,913.5 2019.5,917.5 2021.5,917.5 2023.5,917.5 2025.5,917.5 2027.5,913.5 2030.5,917.5 2032.5,917.5 2034.5,917.5 2036.5,913.5 2038.5,917.5 2041.5,917.5 2043.5,917.5 2045.5,913.5 2047.5,913.5 2049.5,917.5 2051.5,917.5 2054.5,917.5 2056.5,917.5 2058.5,913.5 2060.5,913.5 2062.5,921.5 2064.5,917.5 2067.5,913.5 2069.5,913.5 2071.5,917.5 2073.5,917.5 2075.5,913.5 2078.5,917.5 2080.5,913.5 2082.5,913.5 2084.5,917.5 2086.5,913.5 2088.5,917.5 2091.5,917.5 2093.5,917.5 2095.5,917.5 2097.5,917.5 2099.5,917.5 2101.5,913.5 2104.5,917.5 2106.5,917.5 2108.5,917.5 2110.5,917.5 2112.5,913.5 2115.5,917.5 2117.5,917.5 2119.5,913.5 2121.5,917.5 2123.5,917.5 2125.5,917.5 2128.5,917.5 2130.5,917.5 2132.5,913.5 2134.5,917.5 2136.5,917.5 2138.5,917.5 2141.5,917.5 2143.5,908.5 2145.5,917.5 2147.5,913.5 2149.5,917.5 2152.5,917.5 2154.5,913.5 2156.5,913.5 2158.5,913.5 2160.5,917.5 2162.5,913.5 2165.5,917.5 2167.5,917.5 2169.5,917.5 2171.5,917.5 2173.5,917.5 2175.5,921.5 2178.5,917.5 2180.5,917.5 2182.5,917.5 2184.5,921.5 2186.5,913.5 2189.5,917.5 2191.5,913.5 2193.5,917.5 2195.5,921.5 2197.5,917.5 2199.5,917.5 2202.5,917.5 2204.5,917.5 2206.5,913.5 2208.5,917.5 2210.5,913.5 2213.5,917.5" fill="none" stroke="#989898" stroke-width="1" stroke-linejoin="bevel" shape-rendering="crispEdges"/>
<path d="M38 286.5 H2213 M38 395.5 H2213 M38 505.5 H2213 M38 614.5 H2213 M38 724.5 H2213 M38 833.5 H2213 M38 943.5 H2213 M38 1052.5 H2213 M38 1162.5 H2213" stroke="#f2f2f2" stroke-width="1" stroke-dasharray="3 3" shape-rendering="crispEdges" fill="none"/>
<path d="M256.5 176 V1271 M473.5 176 V1271 M691.5 176 V1271 M908.5 176 V1271 M1126.5 176 V1271 M1344.5 176 V1271 M1561.5 176 V1271 M1779.5 176 V1271 M1996.5 176 V1271" stroke="#f2f2f2" stroke-width="1" stroke-dasharray="3 3" shape-rendering="crispEdges" fill="none"/>
</svg>
<div class="t" id="s_addr" style="left:17px;top:146px;font-size:16.5px;letter-spacing:-0.42px;line-height:22px;color:#fff">USB0::0x0699::0x0408::C041762::INSTR</div>
<div class="t" id="s_h" style="left:450px;top:147px;font-size:16.5px;letter-spacing:-0.23px;line-height:22px;color:#2bd24a">H:400.0us</div>
<div class="t" id="s_c1" style="letter-spacing:-0.35px;left:577px;top:147px;font-size:16.5px;line-height:22px;color:#ffff00">C1:2.0v</div>
<div class="t" id="s_c2" style="letter-spacing:-0.35px;left:897px;top:147px;font-size:16.5px;line-height:22px;color:#1e90ff">C2:2.0v</div>
<div class="t" id="s_c3" style="letter-spacing:-0.35px;left:1204px;top:147px;font-size:16.5px;line-height:22px;color:#ee5bee">C3:2.0v</div>
<div class="t" id="s_c4" style="letter-spacing:-0.35px;left:1534px;top:147px;font-size:16.5px;line-height:22px;color:#12c957">C4:2.0v</div>
<div class="t" id="s_trig" style="left:2142px;top:146px;font-size:22px;line-height:28px;color:#ffff00">已触发</div>
<div class="t" style="left:2358px;top:138px;font-size:18px;line-height:24px;font-weight:bold;color:#111">测量值</div>
<div class="abs" style="left:2255px;top:162px;width:250px;height:1158px;overflow:hidden">
<div class="row" style="left:6px;top:8.00px"><div class="lab"></div><div class="lt"><i>CH1:</i>最大值</div><div class="vt">2.640 V</div></div>
<div class="row" style="left:6px;top:52.40px"><div class="lab"></div><div class="lt"><i>CH1:</i>最小值</div><div class="vt mv">-160.00 mV</div></div>
<div class="row" style="left:6px;top:96.80px"><div class="lab"></div><div class="lt"><i>CH1:</i>平均值</div><div class="vt">1.243 V</div></div>
<div class="row" style="left:6px;top:141.20px"><div class="lab"></div><div class="lt"><i>CH1:</i>幅值</div><div class="vt">2.480 V</div></div>
<div class="row" style="left:6px;top:185.60px"><div class="lab"></div><div class="lt"><i>CH1:</i>频率</div><div class="vt">996.0 HZ</div></div>
<div class="row" style="left:6px;top:230.00px"><div class="lab"></div><div class="lt"><i>CH1:</i>有效值</div><div class="vt">1.755 V</div></div>
<div class="row" style="left:6px;top:274.40px"><div class="lab"></div><div class="lt"><i>CH1:</i>峰峰值</div><div class="vt">2.800 V</div></div>
<div class="row" style="left:6px;top:318.80px"><div class="lab"></div><div class="lt"><i>CH2:</i>最大值</div><div class="vt">2.680 V</div></div>
<div class="row" style="left:6px;top:363.20px"><div class="lab"></div><div class="lt"><i>CH2:</i>最小值</div><div class="vt mv">-40.00 mV</div></div>
<div class="row" style="left:6px;top:407.60px"><div class="lab"></div><div class="lt"><i>CH2:</i>平均值</div><div class="vt">1.287 V</div></div>
<div class="row" style="left:6px;top:452.00px"><div class="lab"></div><div class="lt"><i>CH2:</i>幅值</div><div class="vt">2.480 V</div></div>
<div class="row" style="left:6px;top:496.40px"><div class="lab"></div><div class="lt"><i>CH2:</i>频率</div><div class="vt">995.9 HZ</div></div>
<div class="row" style="left:6px;top:540.80px"><div class="lab"></div><div class="lt"><i>CH2:</i>有效值</div><div class="vt">1.773 V</div></div>
<div class="row" style="left:6px;top:585.20px"><div class="lab"></div><div class="lt"><i>CH2:</i>峰峰值</div><div class="vt">2.720 V</div></div>
<div class="row" style="left:6px;top:629.60px"><div class="lab"></div><div class="lt"><i>CH3:</i>最大值</div><div class="vt">2.640 V</div></div>
<div class="row" style="left:6px;top:674.00px"><div class="lab"></div><div class="lt"><i>CH3:</i>最小值</div><div class="vt mv">-80.00 mV</div></div>
<div class="row" style="left:6px;top:718.40px"><div class="lab"></div><div class="lt"><i>CH3:</i>平均值</div><div class="vt">1.243 V</div></div>
<div class="row" style="left:6px;top:762.80px"><div class="lab"></div><div class="lt"><i>CH3:</i>幅值</div><div class="vt">2.480 V</div></div>
<div class="row" style="left:6px;top:807.20px"><div class="lab"></div><div class="lt"><i>CH3:</i>频率</div><div class="vt">998.8 HZ</div></div>
<div class="row" style="left:6px;top:851.60px"><div class="lab"></div><div class="lt"><i>CH3:</i>有效值</div><div class="vt">1.752 V</div></div>
<div class="row" style="left:6px;top:896.00px"><div class="lab"></div><div class="lt"><i>CH3:</i>峰峰值</div><div class="vt">2.720 V</div></div>
<div class="row" style="left:6px;top:940.40px"><div class="lab"></div><div class="lt"><i>CH4:</i>最大值</div><div class="vt">2.640 V</div></div>
<div class="row" style="left:6px;top:984.80px"><div class="lab"></div><div class="lt"><i>CH4:</i>最小值</div><div class="vt mv">-80.00 mV</div></div>
<div class="row" style="left:6px;top:1029.20px"><div class="lab"></div><div class="lt"><i>CH4:</i>平均值</div><div class="vt">1.263 V</div></div>
<div class="row" style="left:6px;top:1073.60px"><div class="lab"></div><div class="lt"><i>CH4:</i>幅值</div><div class="vt">2.480 V</div></div>
<div class="row" style="left:6px;top:1118.00px"><div class="lab"></div><div class="lt"><i>CH4:</i>频率</div><div class="vt">998.5 HZ</div></div>
</div>
<div class="abs" style="left:2519px;top:162px;width:15px;height:1160px;background:#f0f0f0"></div>
<div class="abs" style="left:2519px;top:178px;width:14px;height:1049px;background:#cdcdcd"></div>
<svg class="abs" style="left:2518px;top:162px" width="15" height="16" viewBox="0 0 15 16"><path d="M4 9.8 L7.5 6.3 L11 9.8" fill="none" stroke="#555" stroke-width="1.7"/></svg>
<svg class="abs" style="left:2518px;top:1306px" width="15" height="16" viewBox="0 0 15 16"><path d="M4 6.2 L7.5 9.7 L11 6.2" fill="none" stroke="#555" stroke-width="1.7"/></svg>
<svg class="abs" style="left:207.60px;top:1310.25px" width="46.20" height="47.70" viewBox="0 0 50 50" preserveAspectRatio="none"><circle cx="25" cy="25" r="25" fill="#e84646"/><rect x="14.7" y="11.90" width="7.5" height="27.2" rx="1.2" fill="#fff"/><rect x="27.8" y="11.90" width="7.5" height="27.2" rx="1.2" fill="#fff"/></svg>
<div class="t" style="left:260px;top:1323.7px;font-size:17.3px;line-height:24px;font-weight:bold;color:#e84646">停止</div>
<div class="t" style="left:1496px;top:1327px;font-size:22px;line-height:28px;color:#1a1a1a">波形名称</div>
<div class="abs" style="left:1604px;top:1319px;width:219px;height:40px;border:1.5px solid #ababab;border-top-color:#999;border-radius:5px;background:#fff"></div>
<div class="t" style="left:1615.3px;top:1323.6px;font-size:22.6px;line-height:28px;color:#1a1a1a">123</div>
<div class="abs" style="left:1840px;top:1329px;width:40px;height:24px;border-radius:12px;background:#e4e4e4"></div>
<div class="abs" style="left:1843.2px;top:1332.6px;width:16.8px;height:16.8px;border-radius:9px;background:#3fdc2e"></div>
<div class="t" style="left:1886px;top:1328px;font-size:19px;line-height:26px;color:#333">打开余晖</div>
<div class="abs" style="left:2014px;top:1311px;width:112px;height:46px;border:1px solid #8ab4e6;border-top:2px solid #8fbce9;border-radius:5px;background:#fff;overflow:hidden"><div class="abs" style="left:0;top:0;width:19px;height:46px;background:#dce8f7"></div><div class="abs" style="right:0;top:0;width:22px;height:46px;background:#dce8f7"></div><svg class="abs" style="left:4.5px;top:13.5px" width="10" height="14" viewBox="0 0 10 14"><path d="M8 1 L2 7 L8 13" fill="none" stroke="#fff" stroke-width="1.6"/></svg><svg class="abs" style="left:94px;top:13.5px" width="10" height="14" viewBox="0 0 10 14"><path d="M2 1 L8 7 L2 13" fill="none" stroke="#fff" stroke-width="1.6"/></svg><div class="t" style="left:15px;width:71px;text-align:center;top:2px;font-size:19px;line-height:22px;color:#0a0aff">2</div><div class="t" style="left:33.6px;top:24px;font-size:14.5px;line-height:18px;color:#111">共2</div><div class="t" style="left:68.2px;top:24px;font-size:14.5px;line-height:18px;color:#111">个</div></div>
<svg class="abs" style="left:2167px;top:1312px" width="41" height="46" viewBox="0 0 41 46">
<path d="M2.8 0.2 L31 0.2 Q32.4 0.2 33.2 1.4 L39 10.5 Q39.8 11.6 39.8 13 L39.8 43.4 Q39.8 45.7 37.5 45.7 L2.8 45.7 Q0.4 45.7 0.4 43.4 L0.4 2.5 Q0.4 0.2 2.8 0.2 Z" fill="#dfe2e6"/>
<rect x="4.2" y="5.2" width="26.2" height="14.8" rx="1.5" fill="#fff"/><rect x="24.2" y="9.6" width="3.3" height="7.4" rx="1" fill="#dfe2e6"/>
<rect x="5.9" y="26" width="27.8" height="5" rx="2.5" fill="#fff"/><rect x="5.9" y="35.6" width="27.8" height="4.6" rx="2.3" fill="#fff"/>
</svg>
<div class="abs" style="left:0;top:1400px;width:2561px;height:1px;background:#0a1f31"></div>
<div class="abs" style="left:48px;top:1400px;width:344px;height:1px;background:#b4b4b4"></div>
<div class="abs" style="left:2560px;top:0;width:1px;height:660px;background:#000"></div>
<div class="abs" style="left:2560px;top:660px;width:1px;height:729px;background:#555"></div>
<div class="abs" style="left:2560px;top:1389px;width:1px;height:12px;background:#0a1f31"></div>
</body></html>
